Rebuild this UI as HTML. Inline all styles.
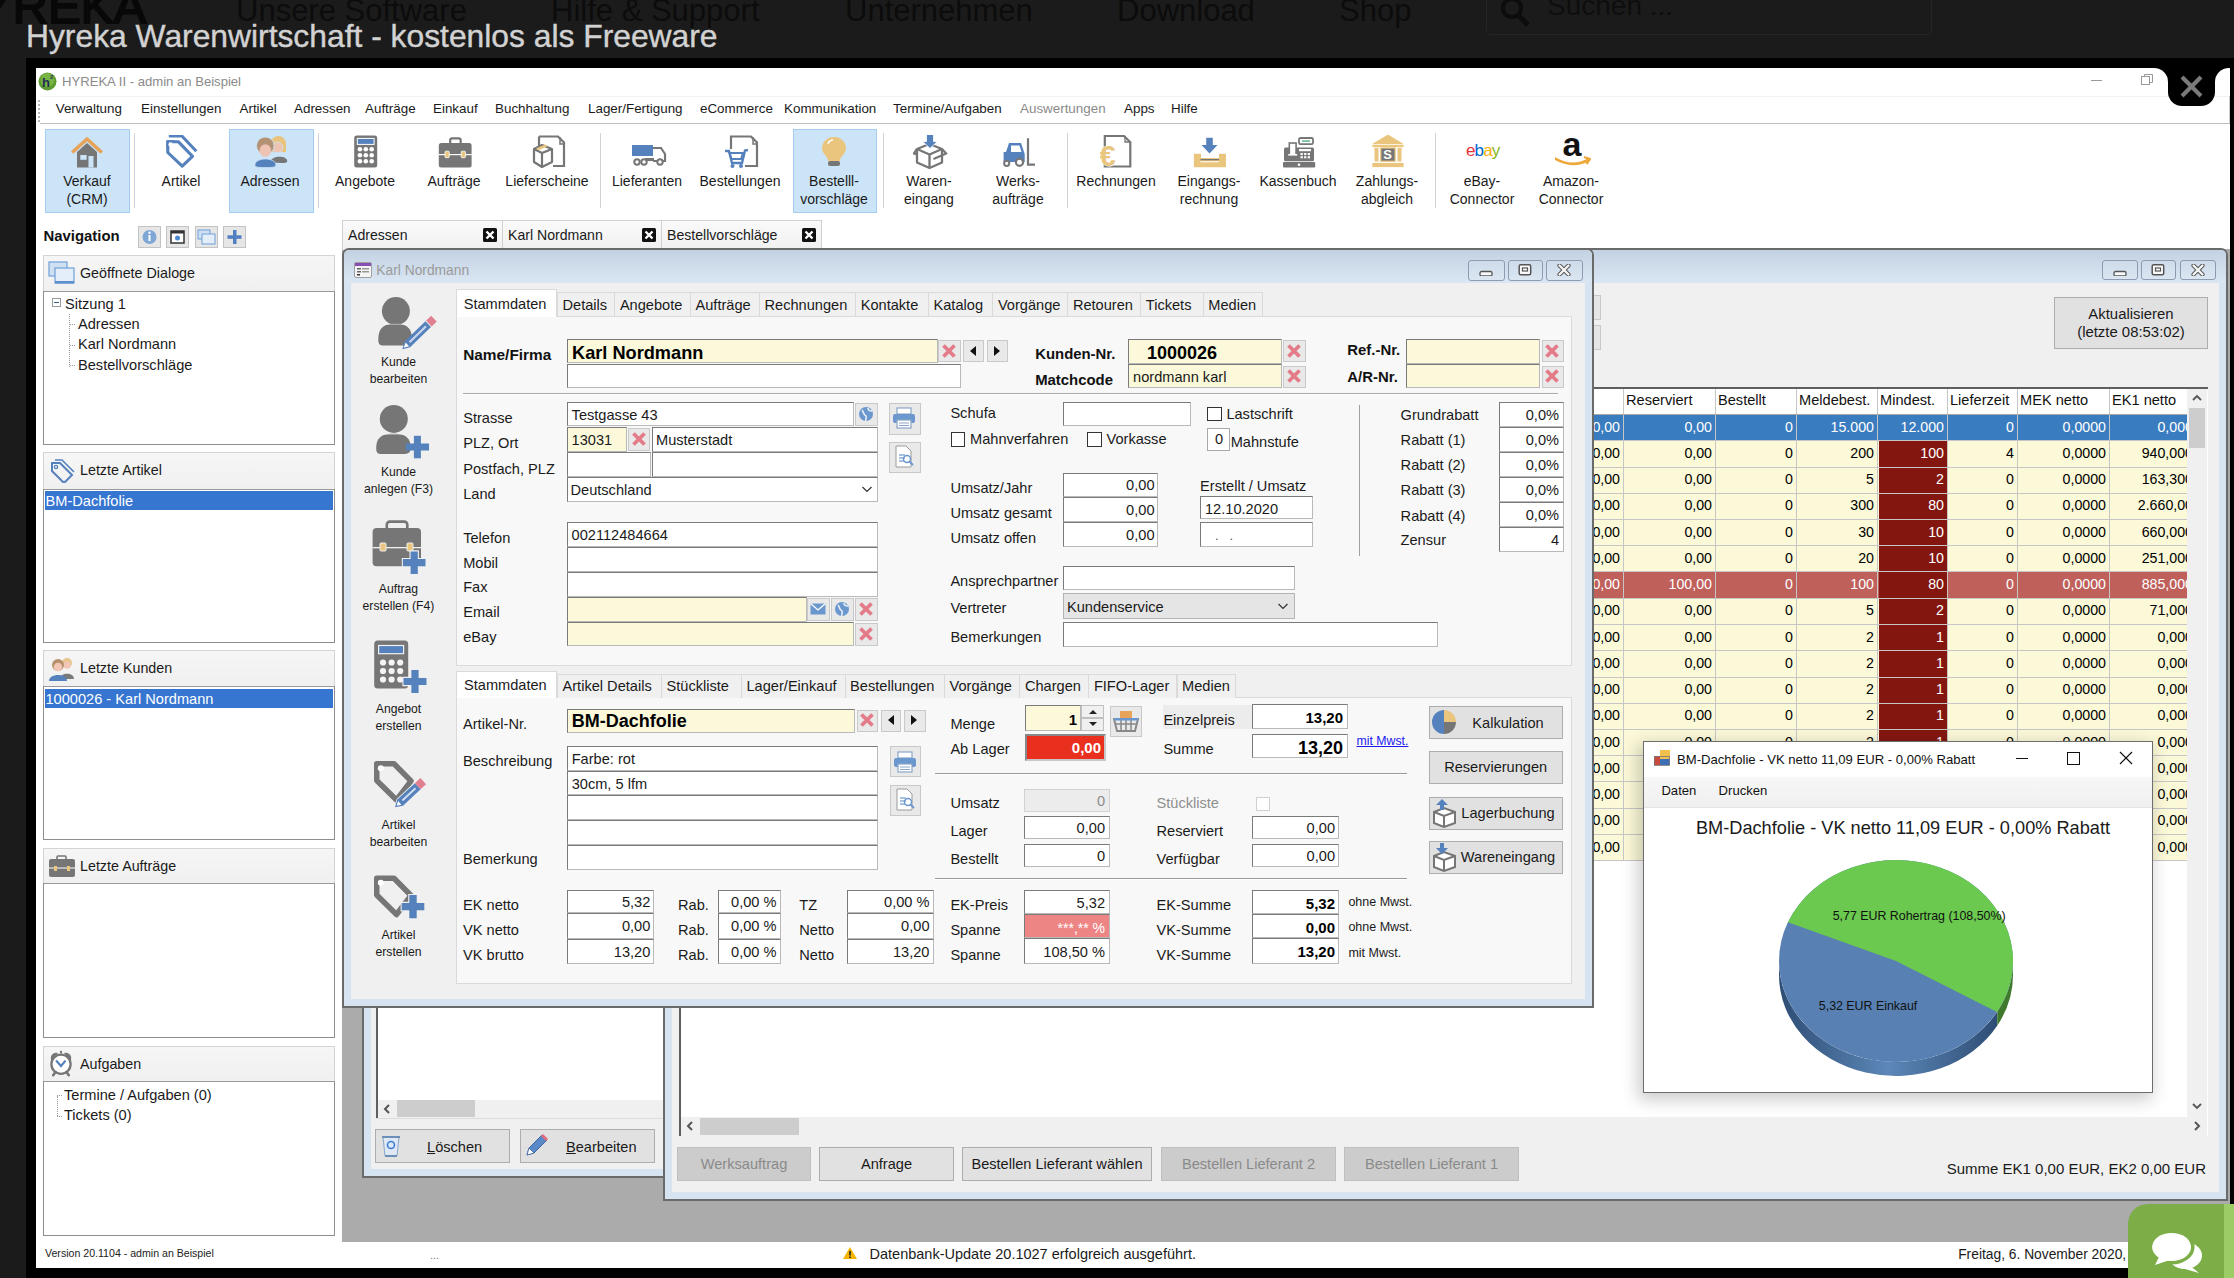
<!DOCTYPE html>
<html><head><meta charset="utf-8"><style>
html,body{margin:0;padding:0;}
body{width:2234px;height:1278px;position:relative;overflow:hidden;background:#1b1b1b;font-family:"Liberation Sans",sans-serif;}
.t{position:absolute;white-space:nowrap;line-height:1;}
.r{position:absolute;}
</style></head><body>
<div class="t" style="left:-20px;top:-18.48px;font-size:49px;color:#080808;font-weight:normal;-webkit-text-stroke:2px #080808;">YREKA</div>
<div class="t" style="left:236px;top:-5.24px;font-size:31px;color:#0c0c0c;font-weight:normal;">Unsere Software</div>
<div class="t" style="left:551px;top:-5.24px;font-size:31px;color:#0c0c0c;font-weight:normal;">Hilfe &amp; Support</div>
<div class="t" style="left:845px;top:-5.24px;font-size:31px;color:#0c0c0c;font-weight:normal;">Unternehmen</div>
<div class="t" style="left:1117px;top:-5.24px;font-size:31px;color:#0c0c0c;font-weight:normal;">Download</div>
<div class="t" style="left:1339px;top:-5.24px;font-size:31px;color:#0c0c0c;font-weight:normal;">Shop</div>
<div class="r" style="left:1486px;top:-10px;width:446px;height:45px;box-sizing:border-box;border:1px solid #262626;border-radius:5px;"></div>
<svg class="r" style="left:1496px;top:0px" width="40" height="30" viewBox="0 0 40 30"><circle cx="16" cy="8" r="9" fill="none" stroke="#0c0c0c" stroke-width="4"/><line x1="22" y1="15" x2="32" y2="25" stroke="#0c0c0c" stroke-width="5"/></svg>
<div class="t" style="left:1547px;top:-7.70px;font-size:28px;color:#0e0e0e;font-weight:normal;">Suchen ...</div>
<div class="t" style="left:26px;top:21.08px;font-size:31.8px;color:#d2d2d2;font-weight:normal;-webkit-text-stroke:0.4px #d2d2d2;">Hyreka Warenwirtschaft - kostenlos als Freeware</div>
<div class="r" style="left:26px;top:58px;width:2208px;height:1220px;background:#000;"></div>
<div class="r" style="left:36px;top:68px;width:2194px;height:1200px;background:#fff;"></div>
<svg class="r" style="left:38px;top:72px" width="19" height="19" viewBox="0 0 19 19"><circle cx="9.5" cy="9.5" r="9" fill="#5a9a2e"/><circle cx="9.5" cy="8" r="7" fill="#78b443"/><text x="4" y="15" font-family="Liberation Sans" font-weight="bold" font-size="13" fill="#1f2f55">h</text><text x="12" y="7" font-family="Liberation Sans" font-weight="bold" font-size="6" fill="#1f2f55">2</text></svg>
<div class="t" style="left:62px;top:74.91px;font-size:13.1px;color:#8a8a8a;font-weight:normal;">HYREKA II - admin an Beispiel</div>
<div class="r" style="left:40px;top:95px;width:2189px;height:28px;background:#fff;border-bottom:1px solid #bdbdbd;border-right:1px solid #cfcfcf;"></div>
<div class="r" style="left:41px;top:96px;width:2188px;height:1px;background:#eef3f8;"></div>
<div class="r" style="left:38px;top:100px;width:2px;height:2px;background:#b8b8b8;"></div>
<div class="r" style="left:38px;top:104px;width:2px;height:2px;background:#b8b8b8;"></div>
<div class="r" style="left:38px;top:108px;width:2px;height:2px;background:#b8b8b8;"></div>
<div class="r" style="left:38px;top:112px;width:2px;height:2px;background:#b8b8b8;"></div>
<div class="r" style="left:38px;top:116px;width:2px;height:2px;background:#b8b8b8;"></div>
<div class="r" style="left:38px;top:120px;width:2px;height:2px;background:#b8b8b8;"></div>
<div class="t" style="left:55.7px;top:102.36px;font-size:13.4px;color:#1a1a1a;font-weight:normal;">Verwaltung</div>
<div class="t" style="left:141px;top:102.36px;font-size:13.4px;color:#1a1a1a;font-weight:normal;">Einstellungen</div>
<div class="t" style="left:239.5px;top:102.36px;font-size:13.4px;color:#1a1a1a;font-weight:normal;">Artikel</div>
<div class="t" style="left:294px;top:102.36px;font-size:13.4px;color:#1a1a1a;font-weight:normal;">Adressen</div>
<div class="t" style="left:365px;top:102.36px;font-size:13.4px;color:#1a1a1a;font-weight:normal;">Aufträge</div>
<div class="t" style="left:433px;top:102.36px;font-size:13.4px;color:#1a1a1a;font-weight:normal;">Einkauf</div>
<div class="t" style="left:495px;top:102.36px;font-size:13.4px;color:#1a1a1a;font-weight:normal;">Buchhaltung</div>
<div class="t" style="left:588px;top:102.36px;font-size:13.4px;color:#1a1a1a;font-weight:normal;">Lager/Fertigung</div>
<div class="t" style="left:700px;top:102.36px;font-size:13.4px;color:#1a1a1a;font-weight:normal;">eCommerce</div>
<div class="t" style="left:784px;top:102.36px;font-size:13.4px;color:#1a1a1a;font-weight:normal;">Kommunikation</div>
<div class="t" style="left:893px;top:102.36px;font-size:13.4px;color:#1a1a1a;font-weight:normal;">Termine/Aufgaben</div>
<div class="t" style="left:1020px;top:102.36px;font-size:13.4px;color:#8a8a8a;font-weight:normal;">Auswertungen</div>
<div class="t" style="left:1124px;top:102.36px;font-size:13.4px;color:#1a1a1a;font-weight:normal;">Apps</div>
<div class="t" style="left:1171px;top:102.36px;font-size:13.4px;color:#1a1a1a;font-weight:normal;">Hilfe</div>
<div class="r" style="left:2154px;top:68px;width:76px;height:14px;background:#000;"></div>
<div class="r" style="left:2140px;top:68px;width:28px;height:28px;border-radius:50%;background:#fff;"></div>
<div class="r" style="left:2215px;top:68px;width:28px;height:28px;border-radius:50%;background:#fff;"></div>
<div class="r" style="left:2168px;top:58px;width:47px;height:48px;border-radius:0 0 14px 14px;background:#000;"></div>
<div class="r" style="left:2230px;top:58px;width:4px;height:72px;background:#000;"></div>
<svg class="r" style="left:2178px;top:74px" width="27" height="25" viewBox="0 0 27 25"><path d="M4 3 L23 22 M23 3 L4 22" stroke="#7a7a7a" stroke-width="4.2"/></svg>
<div class="r" style="left:2091px;top:79.5px;width:11px;height:1.5px;background:#9a9a9a;"></div>
<svg class="r" style="left:2140px;top:73px" width="14" height="14" viewBox="0 0 14 14"><rect x="1.5" y="3.5" width="8" height="8" fill="#fff" stroke="#999"/><path d="M4.5 3.5V1.5h8v8h-3" fill="none" stroke="#999"/></svg>
<div class="r" style="left:36px;top:124px;width:2194px;height:96px;background:#fff;"></div>
<div class="r" style="left:45px;top:129px;width:85px;height:84px;box-sizing:border-box;background:#cce4f7;border:1px solid #a4cef1;"></div>
<div class="r" style="left:229px;top:129px;width:85px;height:84px;box-sizing:border-box;background:#cce4f7;border:1px solid #a4cef1;"></div>
<div class="r" style="left:793px;top:129px;width:84px;height:84px;box-sizing:border-box;background:#cce4f7;border:1px solid #a4cef1;"></div>
<div class="r" style="left:134px;top:133px;width:1px;height:75px;background:#d2d2d2;"></div>
<div class="r" style="left:318px;top:133px;width:1px;height:75px;background:#d2d2d2;"></div>
<div class="r" style="left:600px;top:133px;width:1px;height:75px;background:#d2d2d2;"></div>
<div class="r" style="left:883px;top:133px;width:1px;height:75px;background:#d2d2d2;"></div>
<div class="r" style="left:1067px;top:133px;width:1px;height:75px;background:#d2d2d2;"></div>
<div class="r" style="left:1435px;top:133px;width:1px;height:75px;background:#d2d2d2;"></div>
<svg class="r" style="left:71px;top:135px" width="36" height="36" viewBox="0 0 36 36"><path d="M6 17 L16 8 L26 17 V32.5 H6Z" fill="#767676"/><path d="M1.2 17.5 L16 4 L30.8 17.5" fill="none" stroke="#e8a35a" stroke-width="3.6" stroke-linejoin="round"/><rect x="9.3" y="20" width="6.3" height="4.8" fill="#cce4f7"/><rect x="17.5" y="21" width="5" height="11.5" fill="#cce4f7"/></svg>
<div class="t" style="left:-313px;width:800px;text-align:center;top:173.65px;font-size:14.0px;color:#1a1a1a;font-weight:normal;">Verkauf</div>
<div class="t" style="left:-313px;width:800px;text-align:center;top:191.65px;font-size:14.0px;color:#1a1a1a;font-weight:normal;">(CRM)</div>
<svg class="r" style="left:165px;top:135px" width="36" height="36" viewBox="0 0 36 36"><path d="M3.8 1 H16.9 L31.3 16.3" fill="none" stroke="#5581bd" stroke-width="3" stroke-linejoin="round"/><path d="M2.8 6.8 H13.5 L27.5 21.3 L17.2 31.2 L2.8 17.5Z" fill="#fff" stroke="#5581bd" stroke-width="3.1" stroke-linejoin="round"/><path d="M1.3 5.3 H10 L1.3 14Z" fill="#5581bd"/><circle cx="5.6" cy="9.4" r="2.2" fill="#fff"/></svg>
<div class="t" style="left:-219px;width:800px;text-align:center;top:173.65px;font-size:14.0px;color:#1a1a1a;font-weight:normal;">Artikel</div>
<svg class="r" style="left:254px;top:135px" width="36" height="36" viewBox="0 0 36 36"><circle cx="24.4" cy="8.6" r="7.6" fill="#e8c47f"/><rect x="16.8" y="8.6" width="15.2" height="8.5" fill="#e8c47f"/><path d="M16.3 27.6 C16.3 20 33.2 20 33.2 26 C33.2 28 30 28 28 28Z" fill="#767676"/><circle cx="23.5" cy="12.5" r="5.3" fill="#efc3b3" stroke="#cce4f7" stroke-width="0.8"/><circle cx="11.3" cy="10.8" r="8.8" fill="#b39174" stroke="#cce4f7" stroke-width="0.8"/><ellipse cx="11.3" cy="15.5" rx="5.8" ry="6.3" fill="#efc3b3"/><path d="M0.9 30 C0.9 22 21.9 22 21.9 30 C21.9 32.5 18 32.5 11.4 32.5 C5 32.5 0.9 32.5 0.9 30Z" fill="#5581bd" stroke="#cce4f7" stroke-width="0.8"/></svg>
<div class="t" style="left:-130px;width:800px;text-align:center;top:173.65px;font-size:14.0px;color:#1a1a1a;font-weight:normal;">Adressen</div>
<svg class="r" style="left:349px;top:135px" width="36" height="36" viewBox="0 0 36 36"><rect x="5.2" y="0.5" width="23" height="32" rx="2.5" fill="#767676"/><rect x="8.3" y="3.4" width="16.8" height="6" fill="#5581bd" stroke="#fff" stroke-width="1"/><circle cx="10.9" cy="14.3" r="2.3" fill="#fff"/><circle cx="10.9" cy="20.3" r="2.3" fill="#fff"/><circle cx="10.9" cy="26.3" r="2.3" fill="#fff"/><circle cx="16.8" cy="14.3" r="2.3" fill="#fff"/><circle cx="16.8" cy="20.3" r="2.3" fill="#fff"/><circle cx="16.8" cy="26.3" r="2.3" fill="#fff"/><circle cx="22.700000000000003" cy="14.3" r="2.3" fill="#fff"/><circle cx="22.700000000000003" cy="20.3" r="2.3" fill="#fff"/><circle cx="22.700000000000003" cy="26.3" r="2.3" fill="#fff"/></svg>
<div class="t" style="left:-35px;width:800px;text-align:center;top:173.65px;font-size:14.0px;color:#1a1a1a;font-weight:normal;">Angebote</div>
<svg class="r" style="left:438px;top:135px" width="36" height="36" viewBox="0 0 36 36"><rect x="12.2" y="3.4" width="10.5" height="6" rx="2" fill="none" stroke="#767676" stroke-width="2.2"/><rect x="0.8" y="8" width="32.8" height="24.5" rx="2.5" fill="#767676"/><rect x="0.8" y="19" width="32.8" height="1.2" fill="#fff"/><rect x="7" y="16.2" width="4.2" height="6.5" rx="0.8" fill="#eac57e" stroke="#fff" stroke-width="0.8"/><rect x="23.2" y="16.2" width="4.2" height="6.5" rx="0.8" fill="#eac57e" stroke="#fff" stroke-width="0.8"/></svg>
<div class="t" style="left:54px;width:800px;text-align:center;top:173.65px;font-size:14.0px;color:#1a1a1a;font-weight:normal;">Aufträge</div>
<svg class="r" style="left:531px;top:135px" width="36" height="36" viewBox="0 0 36 36"><path d="M8 1.5 H27 L33 7.5 V31 H22" fill="none" stroke="#767676" stroke-width="2.2"/><path d="M8 1.5 V12" stroke="#767676" stroke-width="2.2"/><path d="M29 2 V9 H33" fill="none" stroke="#767676" stroke-width="1.5"/><path d="M3 14 L11 10 L21 14 V27 L11 32 L3 27Z" fill="#fff" stroke="#767676" stroke-width="2.2" stroke-linejoin="round"/><path d="M3 14 L11 18 L21 14 M11 18 V32" fill="none" stroke="#767676" stroke-width="2.2"/><path d="M5 13.5 L14 9.5 L17 11 L8 15Z" fill="#eac57e"/></svg>
<div class="t" style="left:147px;width:800px;text-align:center;top:173.65px;font-size:14.0px;color:#1a1a1a;font-weight:normal;">Lieferscheine</div>
<svg class="r" style="left:631px;top:135px" width="36" height="36" viewBox="0 0 36 36"><rect x="1" y="10" width="21" height="11" fill="#5581bd"/><path d="M22 13 H30 L34 19 V26 H22" fill="none" stroke="#767676" stroke-width="2.2"/><rect x="14" y="23" width="9" height="3" fill="#767676"/><circle cx="6" cy="27" r="2.7" fill="#fff" stroke="#767676" stroke-width="2"/><circle cx="13" cy="27" r="2.7" fill="#fff" stroke="#767676" stroke-width="2"/><circle cx="29" cy="27" r="2.7" fill="#fff" stroke="#767676" stroke-width="2"/></svg>
<div class="t" style="left:247px;width:800px;text-align:center;top:173.65px;font-size:14.0px;color:#1a1a1a;font-weight:normal;">Lieferanten</div>
<svg class="r" style="left:724px;top:135px" width="36" height="36" viewBox="0 0 36 36"><path d="M7 14 V1.5 H27 L33 7.5 V31 H21" fill="none" stroke="#767676" stroke-width="2.2"/><path d="M29 2 V9 H33" fill="none" stroke="#767676" stroke-width="1.5"/><path d="M1 16 H5 L8 28 H18 L21 15.5 L24 15" fill="none" stroke="#5581bd" stroke-width="2.4"/><path d="M5.5 18 H19 L17 24 H7.5Z" fill="none" stroke="#5581bd" stroke-width="2"/><circle cx="8.5" cy="31" r="2" fill="#5581bd"/><circle cx="17" cy="31" r="2" fill="#5581bd"/></svg>
<div class="t" style="left:340px;width:800px;text-align:center;top:173.65px;font-size:14.0px;color:#1a1a1a;font-weight:normal;">Bestellungen</div>
<svg class="r" style="left:818px;top:135px" width="36" height="36" viewBox="0 0 36 36"><path d="M16 2 C8 2 4 8 4 13 C4 19 10 21 10 26 H22 C22 21 28 19 28 13 C28 8 24 2 16 2Z" fill="#eac57e"/><rect x="10" y="26" width="12" height="5" rx="2" fill="#767676"/><path d="M10 9 C11 6 13 5 15 5" fill="none" stroke="#fff" stroke-width="1.5"/></svg>
<div class="t" style="left:434px;width:800px;text-align:center;top:173.65px;font-size:14.0px;color:#1a1a1a;font-weight:normal;">Bestelll-</div>
<div class="t" style="left:434px;width:800px;text-align:center;top:191.65px;font-size:14.0px;color:#1a1a1a;font-weight:normal;">vorschläge</div>
<svg class="r" style="left:913px;top:135px" width="36" height="36" viewBox="0 0 36 36"><path d="M4 14 L16.5 9 L29 14 V27.5 L16.5 33 L4 27.5Z" fill="#fff" stroke="#767676" stroke-width="2.3" stroke-linejoin="round"/><path d="M4 14 L16.5 19.5 L29 14 M16.5 19.5 V33 M4 14 L0.8 18.5 L4 19.5 M29 14 L33.2 18.5 L20.5 24" fill="none" stroke="#767676" stroke-width="2.3" stroke-linejoin="round"/><path d="M13.5 -0.7 H20.5 V6.5 H24.3 L17 13.4 L9.7 6.5 H13.5Z" fill="#5581bd" stroke="#fff" stroke-width="0.8"/></svg>
<div class="t" style="left:529px;width:800px;text-align:center;top:173.65px;font-size:14.0px;color:#1a1a1a;font-weight:normal;">Waren-</div>
<div class="t" style="left:529px;width:800px;text-align:center;top:191.65px;font-size:14.0px;color:#1a1a1a;font-weight:normal;">eingang</div>
<svg class="r" style="left:1002px;top:135px" width="36" height="36" viewBox="0 0 36 36"><path d="M4 17 L7 8 H19 L22.7 19 V27 H1.6 V17Z" fill="#5581bd"/><path d="M9 10.5 H17.5 L19.5 17 H9Z" fill="#fff"/><path d="M26 3.2 V29.6 H33" fill="none" stroke="#767676" stroke-width="2.2"/><circle cx="4.7" cy="28.3" r="2.6" fill="#fff" stroke="#767676" stroke-width="2"/><circle cx="17.5" cy="27.3" r="3.6" fill="#fff" stroke="#767676" stroke-width="2.2"/></svg>
<div class="t" style="left:618px;width:800px;text-align:center;top:173.65px;font-size:14.0px;color:#1a1a1a;font-weight:normal;">Werks-</div>
<div class="t" style="left:618px;width:800px;text-align:center;top:191.65px;font-size:14.0px;color:#1a1a1a;font-weight:normal;">aufträge</div>
<svg class="r" style="left:1100px;top:135px" width="36" height="36" viewBox="0 0 36 36"><path d="M4.8 1 H24 L30.3 7.3 V31.5 H4.8Z" fill="none" stroke="#767676" stroke-width="2.2"/><path d="M25 1.5 V7 H30" fill="none" stroke="#767676" stroke-width="1.3"/><text x="-0.5" y="31" font-family="Liberation Sans" font-weight="bold" font-size="29" fill="#eac57e" stroke="#fff" stroke-width="1" paint-order="stroke">€</text></svg>
<div class="t" style="left:716px;width:800px;text-align:center;top:173.65px;font-size:14.0px;color:#1a1a1a;font-weight:normal;">Rechnungen</div>
<svg class="r" style="left:1193px;top:135px" width="36" height="36" viewBox="0 0 36 36"><path d="M13.2 2.7 H19.8 V10 H24.5 L16.5 18.5 L8.5 10 H13.2Z" fill="#5581bd"/><path d="M0.9 18.8 H8 V23 H26 V18.8 H33 V32.2 H0.9Z" fill="#eac57e"/><rect x="7.5" y="24" width="18.5" height="1.3" fill="#767676"/><rect x="7.5" y="26.3" width="18.5" height="1" fill="#fff"/></svg>
<div class="t" style="left:809px;width:800px;text-align:center;top:173.65px;font-size:14.0px;color:#1a1a1a;font-weight:normal;">Eingangs-</div>
<div class="t" style="left:809px;width:800px;text-align:center;top:191.65px;font-size:14.0px;color:#1a1a1a;font-weight:normal;">rechnung</div>
<svg class="r" style="left:1282px;top:135px" width="36" height="36" viewBox="0 0 36 36"><rect x="17" y="3" width="14" height="6.2" rx="1.5" fill="#fff" stroke="#767676" stroke-width="1.8"/><rect x="20" y="5.2" width="8" height="1.8" fill="#7cc0a0"/><rect x="2" y="12.6" width="30" height="13.6" rx="1.5" fill="#767676"/><rect x="7.3" y="8" width="6.8" height="12.2" fill="#fff" stroke="#767676" stroke-width="1.6"/><rect x="6.3" y="19" width="8.8" height="1.6" fill="#fff"/><rect x="17" y="14" width="12" height="2.2" fill="#fff"/><rect x="1" y="27" width="32.2" height="5.5" rx="1" fill="#767676"/><circle cx="17" cy="29.7" r="1.3" fill="#fff"/><rect x="18.5" y="18.0" width="2.3" height="2.1" fill="#fff"/><rect x="18.5" y="21.2" width="2.3" height="2.1" fill="#fff"/><rect x="22.1" y="18.0" width="2.3" height="2.1" fill="#fff"/><rect x="22.1" y="21.2" width="2.3" height="2.1" fill="#fff"/><rect x="25.7" y="18.0" width="2.3" height="2.1" fill="#fff"/><rect x="25.7" y="21.2" width="2.3" height="2.1" fill="#fff"/></svg>
<div class="t" style="left:898px;width:800px;text-align:center;top:173.65px;font-size:14.0px;color:#1a1a1a;font-weight:normal;">Kassenbuch</div>
<svg class="r" style="left:1371px;top:135px" width="36" height="36" viewBox="0 0 36 36"><path d="M0.8 9.2 L17 -0.5 L33 9.2Z" fill="#eac57e"/><rect x="1.5" y="10" width="31" height="2.2" fill="#eac57e"/><rect x="3.5" y="13" width="4" height="13.5" fill="#eac57e"/><rect x="26.5" y="13" width="4" height="13.5" fill="#eac57e"/><rect x="9.8" y="13" width="14.3" height="13.2" fill="#767676" stroke="#eac57e" stroke-width="1.2"/><text x="12.3" y="24.3" font-family="Liberation Sans" font-weight="bold" font-size="13" fill="#fff">S</text><rect x="1.3" y="27.9" width="31.3" height="4.2" fill="#eac57e"/></svg>
<div class="t" style="left:987px;width:800px;text-align:center;top:173.65px;font-size:14.0px;color:#1a1a1a;font-weight:normal;">Zahlungs-</div>
<div class="t" style="left:987px;width:800px;text-align:center;top:191.65px;font-size:14.0px;color:#1a1a1a;font-weight:normal;">abgleich</div>
<svg class="r" style="left:1466px;top:135px" width="36" height="36" viewBox="0 0 36 36"><text x="0" y="21" font-family="Liberation Sans" font-size="17" letter-spacing="-0.9"><tspan fill="#e53238">e</tspan><tspan fill="#0064d2">b</tspan><tspan fill="#f5af02">a</tspan><tspan fill="#86b817">y</tspan></text></svg>
<div class="t" style="left:1082px;width:800px;text-align:center;top:173.65px;font-size:14.0px;color:#1a1a1a;font-weight:normal;">eBay-</div>
<div class="t" style="left:1082px;width:800px;text-align:center;top:191.65px;font-size:14.0px;color:#1a1a1a;font-weight:normal;">Connector</div>
<svg class="r" style="left:1555px;top:135px" width="36" height="36" viewBox="0 0 36 36"><text x="7.5" y="21" font-family="Liberation Sans" font-weight="bold" font-size="34" fill="#111">a</text><path d="M-1 23 Q17 34 34 24.5" fill="none" stroke="#eea73a" stroke-width="2.6"/><path d="M29 22 L35 24 L31.5 29" fill="none" stroke="#eea73a" stroke-width="2.2"/></svg>
<div class="t" style="left:1171px;width:800px;text-align:center;top:173.65px;font-size:14.0px;color:#1a1a1a;font-weight:normal;">Amazon-</div>
<div class="t" style="left:1171px;width:800px;text-align:center;top:191.65px;font-size:14.0px;color:#1a1a1a;font-weight:normal;">Connector</div>
<div class="t" style="left:43.5px;top:229.39px;font-size:14.9px;color:#111;font-weight:bold;">Navigation</div>
<div class="r" style="left:138px;top:226px;width:23px;height:22px;box-sizing:border-box;background:#e6e6e6;border:1px solid #c3c3c3;"></div>
<div class="r" style="left:166px;top:226px;width:23px;height:22px;box-sizing:border-box;background:#e6e6e6;border:1px solid #c3c3c3;"></div>
<div class="r" style="left:195px;top:226px;width:23px;height:22px;box-sizing:border-box;background:#e6e6e6;border:1px solid #c3c3c3;"></div>
<div class="r" style="left:223px;top:226px;width:23px;height:22px;box-sizing:border-box;background:#e6e6e6;border:1px solid #c3c3c3;"></div>
<svg class="r" style="left:138px;top:226px" width="23" height="22" viewBox="0 0 23 22"><circle cx="11.5" cy="11" r="7" fill="#7ea7d6"/><rect x="10.5" y="9" width="2" height="6" fill="#fff"/><circle cx="11.5" cy="6.8" r="1.2" fill="#fff"/></svg>
<svg class="r" style="left:166px;top:226px" width="23" height="22" viewBox="0 0 23 22"><rect x="5" y="5" width="13" height="12" fill="#fff" stroke="#333" stroke-width="1.5"/><rect x="5" y="5" width="13" height="2.5" fill="#333"/><circle cx="11.5" cy="12" r="2.5" fill="#4f8ad0"/></svg>
<svg class="r" style="left:195px;top:226px" width="23" height="22" viewBox="0 0 23 22"><rect x="3" y="4" width="12" height="9" fill="#cfe0f3" stroke="#6fa0d8"/><rect x="7" y="8" width="13" height="10" fill="#e3eefa" stroke="#6fa0d8"/></svg>
<svg class="r" style="left:223px;top:226px" width="23" height="22" viewBox="0 0 23 22"><rect x="10" y="4" width="3.5" height="14" fill="#4f7fc0"/><rect x="4.5" y="9.3" width="14" height="3.5" fill="#4f7fc0"/></svg>
<div class="r" style="left:43px;top:255px;width:292px;height:37px;box-sizing:border-box;background:linear-gradient(#f6f6f6,#f0f0f0);border:1px solid #d4d4d4;"></div>
<div class="r" style="left:43px;top:291px;width:292px;height:154px;box-sizing:border-box;background:#fff;border:1px solid #8e8e8e;border-top-color:#9a9a9a;"></div>
<div class="t" style="left:80px;top:265.90px;font-size:14.3px;color:#1a1a1a;font-weight:normal;">Geöffnete Dialoge</div>
<div class="r" style="left:43px;top:452px;width:292px;height:38px;box-sizing:border-box;background:linear-gradient(#f6f6f6,#f0f0f0);border:1px solid #d4d4d4;"></div>
<div class="r" style="left:43px;top:489px;width:292px;height:154px;box-sizing:border-box;background:#fff;border:1px solid #8e8e8e;border-top-color:#9a9a9a;"></div>
<div class="t" style="left:80px;top:462.90px;font-size:14.3px;color:#1a1a1a;font-weight:normal;">Letzte Artikel</div>
<div class="r" style="left:43px;top:650px;width:292px;height:37px;box-sizing:border-box;background:linear-gradient(#f6f6f6,#f0f0f0);border:1px solid #d4d4d4;"></div>
<div class="r" style="left:43px;top:686px;width:292px;height:154px;box-sizing:border-box;background:#fff;border:1px solid #8e8e8e;border-top-color:#9a9a9a;"></div>
<div class="t" style="left:80px;top:660.90px;font-size:14.3px;color:#1a1a1a;font-weight:normal;">Letzte Kunden</div>
<div class="r" style="left:43px;top:848px;width:292px;height:36px;box-sizing:border-box;background:linear-gradient(#f6f6f6,#f0f0f0);border:1px solid #d4d4d4;"></div>
<div class="r" style="left:43px;top:883px;width:292px;height:155px;box-sizing:border-box;background:#fff;border:1px solid #8e8e8e;border-top-color:#9a9a9a;"></div>
<div class="t" style="left:80px;top:858.90px;font-size:14.3px;color:#1a1a1a;font-weight:normal;">Letzte Aufträge</div>
<div class="r" style="left:43px;top:1046px;width:292px;height:36px;box-sizing:border-box;background:linear-gradient(#f6f6f6,#f0f0f0);border:1px solid #d4d4d4;"></div>
<div class="r" style="left:43px;top:1081px;width:292px;height:155px;box-sizing:border-box;background:#fff;border:1px solid #8e8e8e;border-top-color:#9a9a9a;"></div>
<div class="t" style="left:80px;top:1056.90px;font-size:14.3px;color:#1a1a1a;font-weight:normal;">Aufgaben</div>
<svg class="r" style="left:48px;top:259px" width="28" height="26" viewBox="0 0 28 26"><rect x="1" y="3" width="18" height="14" fill="#cfe0f3" stroke="#6fa0d8" stroke-width="1.2"/><rect x="7" y="9" width="19" height="15" fill="#e3eefa" stroke="#6fa0d8" stroke-width="1.2"/><rect x="7" y="22" width="19" height="2.5" fill="#5b8fd0"/></svg>
<svg class="r" style="left:48px;top:457px" width="28" height="26" viewBox="0 0 28 26"><path d="M4 6 H12 L24 18 L16 26 L4 14Z" fill="none" stroke="#5581bd" stroke-width="2"/><path d="M7 3 H14 L26 15" fill="none" stroke="#5581bd" stroke-width="1.6"/><circle cx="8" cy="10" r="1.6" fill="none" stroke="#5581bd" stroke-width="1.3"/></svg>
<svg class="r" style="left:48px;top:655px" width="28" height="26" viewBox="0 0 28 26"><circle cx="19" cy="8" r="5" fill="#e9c58a"/><path d="M12 24 C12 17 26 17 26 24Z" fill="#7a7a7a"/><circle cx="19" cy="10" r="3.8" fill="#f2c6b5"/><circle cx="10" cy="10" r="6" fill="#b5916b"/><circle cx="10" cy="12" r="4.3" fill="#f2c6b5"/><path d="M1 26 C1 18 19 18 19 26Z" fill="#5581bd"/></svg>
<svg class="r" style="left:48px;top:853px" width="28" height="26" viewBox="0 0 28 26"><rect x="9" y="3" width="9" height="4" rx="1" fill="none" stroke="#767676" stroke-width="1.6"/><rect x="1" y="6" width="26" height="18" rx="2" fill="#767676"/><line x1="1" y1="15" x2="27" y2="15" stroke="#fff" stroke-width="1"/><rect x="6" y="13" width="3" height="5" fill="#eac57e"/><rect x="19" y="13" width="3" height="5" fill="#eac57e"/></svg>
<svg class="r" style="left:48px;top:1050px" width="28" height="28" viewBox="0 0 28 28"><path d="M3.2 10.5 C1.5 6 5 1.5 10 3Z" fill="#767676"/><path d="M22.8 10.5 C24.5 6 21 1.5 16 3Z" fill="#767676"/><rect x="12" y="0.8" width="2" height="2.6" fill="#767676"/><circle cx="13" cy="14.2" r="9.6" fill="#fff" stroke="#767676" stroke-width="2.3"/><path d="M7.5 22 L5.2 25.2 M18.5 22 L20.8 25.2" stroke="#767676" stroke-width="2.6" stroke-linecap="round"/><path d="M8.1 10.6 L13 16 L17.5 10.6" fill="none" stroke="#5581bd" stroke-width="2.2"/></svg>
<div class="r" style="left:52px;top:298px;width:9px;height:9px;box-sizing:border-box;background:#fff;border:1px solid #9a9a9a;"></div>
<div class="r" style="left:54px;top:302px;width:5px;height:1px;background:#3d5a8a;"></div>
<div class="t" style="left:65px;top:296.64px;font-size:14.6px;color:#1a1a1a;font-weight:normal;">Sitzung 1</div>
<div class="r" style="left:69px;top:314px;width:0;height:53px;border-left:1px dotted #9a9a9a;"></div>
<div class="r" style="left:70px;top:324px;width:5px;height:0;border-top:1px dotted #9a9a9a;"></div>
<div class="t" style="left:78px;top:316.64px;font-size:14.6px;color:#1a1a1a;font-weight:normal;">Adressen</div>
<div class="r" style="left:70px;top:344.5px;width:5px;height:0;border-top:1px dotted #9a9a9a;"></div>
<div class="t" style="left:78px;top:337.14px;font-size:14.6px;color:#1a1a1a;font-weight:normal;">Karl Nordmann</div>
<div class="r" style="left:70px;top:365px;width:5px;height:0;border-top:1px dotted #9a9a9a;"></div>
<div class="t" style="left:78px;top:357.64px;font-size:14.6px;color:#1a1a1a;font-weight:normal;">Bestellvorschläge</div>
<div class="r" style="left:45px;top:491px;width:288px;height:19px;background:#3676d0;"></div>
<div class="t" style="left:45.5px;top:493.64px;font-size:14.6px;color:#fff;font-weight:normal;">BM-Dachfolie</div>
<div class="r" style="left:45px;top:688.5px;width:288px;height:19.0px;background:#3676d0;"></div>
<div class="t" style="left:45.5px;top:691.64px;font-size:14.6px;color:#fff;font-weight:normal;">1000026 - Karl Nordmann</div>
<div class="r" style="left:57px;top:1096px;width:0;height:20px;border-left:1px dotted #9a9a9a;"></div>
<div class="r" style="left:57px;top:1095px;width:5px;height:0;border-top:1px dotted #9a9a9a;"></div>
<div class="t" style="left:64px;top:1087.64px;font-size:14.6px;color:#1a1a1a;font-weight:normal;">Termine / Aufgaben (0)</div>
<div class="r" style="left:57px;top:1115.5px;width:5px;height:0;border-top:1px dotted #9a9a9a;"></div>
<div class="t" style="left:64px;top:1108.14px;font-size:14.6px;color:#1a1a1a;font-weight:normal;">Tickets (0)</div>
<div class="t" style="left:45px;top:1248.03px;font-size:10.6px;color:#222;font-weight:normal;">Version 20.1104 - admin an Beispiel</div>
<div class="r" style="left:342px;top:249px;width:1888px;height:993px;background:#ababab;"></div>
<div class="r" style="left:342px;top:220px;width:1888px;height:29px;background:#fff;"></div>
<div class="r" style="left:342px;top:220px;width:161px;height:30px;box-sizing:border-box;background:linear-gradient(#fafafa,#f0f0f0);border:1px solid #d0d0d0;border-bottom:none;"></div>
<div class="t" style="left:348px;top:227.56px;font-size:14.1px;color:#1a1a1a;font-weight:normal;">Adressen</div>
<svg class="r" style="left:483px;top:228px" width="14" height="14" viewBox="0 0 14 14"><rect width="14" height="14" rx="1.5" fill="#111"/><path d="M3.5 3.5 L10.5 10.5 M10.5 3.5 L3.5 10.5" stroke="#fff" stroke-width="2.4"/></svg>
<div class="r" style="left:502px;top:220px;width:160px;height:30px;box-sizing:border-box;background:linear-gradient(#fafafa,#f0f0f0);border:1px solid #d0d0d0;border-bottom:none;"></div>
<div class="t" style="left:508px;top:227.56px;font-size:14.1px;color:#1a1a1a;font-weight:normal;">Karl Nordmann</div>
<svg class="r" style="left:642px;top:228px" width="14" height="14" viewBox="0 0 14 14"><rect width="14" height="14" rx="1.5" fill="#111"/><path d="M3.5 3.5 L10.5 10.5 M10.5 3.5 L3.5 10.5" stroke="#fff" stroke-width="2.4"/></svg>
<div class="r" style="left:661px;top:220px;width:161px;height:30px;box-sizing:border-box;background:linear-gradient(#fafafa,#f0f0f0);border:1px solid #d0d0d0;border-bottom:none;"></div>
<div class="t" style="left:667px;top:227.56px;font-size:14.1px;color:#1a1a1a;font-weight:normal;">Bestellvorschläge</div>
<svg class="r" style="left:802px;top:228px" width="14" height="14" viewBox="0 0 14 14"><rect width="14" height="14" rx="1.5" fill="#111"/><path d="M3.5 3.5 L10.5 10.5 M10.5 3.5 L3.5 10.5" stroke="#fff" stroke-width="2.4"/></svg>
<div class="r" style="left:362px;top:699px;width:338px;height:479px;box-sizing:border-box;background:#d6e4f2;border:2px solid #6a6a6a;border-radius:7px 7px 0 0;"></div>
<div class="r" style="left:364px;top:701px;width:334px;height:33px;background:linear-gradient(#c3d2e2,#dae6f3);border-radius:5px 5px 0 0;"></div>
<div class="r" style="left:371px;top:734px;width:320px;height:435px;background:#f0f0f0;"></div>
<div class="r" style="left:376px;top:700px;width:287px;height:418px;background:#fff;border-left:2px solid #5f5f5f;box-sizing:border-box;"></div>
<div class="r" style="left:378px;top:1100px;width:285px;height:18px;background:#f0f0f0;"></div>
<div class="r" style="left:397px;top:1100px;width:78px;height:17px;background:#cdcdcd;"></div>
<svg class="r" style="left:380px;top:1102px" width="14" height="14" viewBox="0 0 14 14"><path d="M9 3 L5 7 L9 11" fill="none" stroke="#555" stroke-width="2"/></svg>
<div class="r" style="left:376px;top:1118px;width:287px;height:1px;background:#dcdcdc;"></div>
<div class="r" style="left:375px;top:1128.5px;width:135px;height:34.0px;box-sizing:border-box;background:#e1e1e1;border:1px solid #adadad;"></div>
<div class="r" style="left:520px;top:1128.5px;width:135px;height:34.0px;box-sizing:border-box;background:#e1e1e1;border:1px solid #adadad;"></div>
<svg class="r" style="left:380px;top:1133px" width="22" height="26" viewBox="0 0 22 26"><path d="M3 4 H19 L17 23 H5Z" fill="#dfe9f5" stroke="#8aa6c8" stroke-width="1"/><rect x="2" y="3" width="18" height="2" fill="#6c8fb8"/><rect x="5" y="22" width="12" height="2" fill="#6c8fb8"/><circle cx="11" cy="12" r="3.5" fill="none" stroke="#3b7dd8" stroke-width="1.6"/></svg>
<div class="t" style="left:427px;top:1139.64px;font-size:14.6px;color:#1a1a1a;font-weight:normal;"><u>L</u>öschen</div>
<svg class="r" style="left:524px;top:1132px" width="26" height="26" viewBox="0 0 26 26"><path d="M3 23 L5 16 L18 3 L23 8 L10 21Z" fill="#5a89c8" stroke="#3f6aa5" stroke-width="1"/><path d="M17 4 L19 2 L24 7 L22 9Z" fill="#e26d7e"/><path d="M3 23 L5 16 L10 21Z" fill="#fff" stroke="#3f6aa5" stroke-width="0.8"/></svg>
<div class="t" style="left:566px;top:1139.64px;font-size:14.6px;color:#1a1a1a;font-weight:normal;"><u>B</u>earbeiten</div>
<div class="r" style="left:663px;top:248px;width:1565px;height:953px;box-sizing:border-box;background:#d6e4f2;border:2px solid #6a6a6a;border-radius:7px 7px 0 0;"></div>
<div class="r" style="left:665px;top:250px;width:1561px;height:33px;background:linear-gradient(#c3d2e2,#dae6f3);border-radius:5px 5px 0 0;"></div>
<div class="r" style="left:672px;top:283px;width:1547px;height:909px;background:#f0f0f0;"></div>
<div class="r" style="left:2102px;top:260px;width:36px;height:20px;box-sizing:border-box;background:rgba(255,255,255,0.08);border:1.5px solid #8e9bb0;border-radius:3px;"></div>
<svg class="r" style="left:2112px;top:264px" width="16" height="12" viewBox="0 0 16 12"><rect x="2" y="7.5" width="12" height="4.5" rx="1.5" fill="#fafafa" stroke="#555" stroke-width="1.3"/></svg>
<div class="r" style="left:2141px;top:260px;width:35px;height:20px;box-sizing:border-box;background:rgba(255,255,255,0.08);border:1.5px solid #8e9bb0;border-radius:3px;"></div>
<svg class="r" style="left:2150px;top:264px" width="16" height="12" viewBox="0 0 16 12"><rect x="2.2" y="0.8" width="11.5" height="10" rx="1.5" fill="#fafafa" stroke="#555" stroke-width="1.5"/><rect x="5.5" y="4" width="5" height="3" fill="#fff" stroke="#555" stroke-width="1.2"/></svg>
<div class="r" style="left:2180px;top:260px;width:36px;height:20px;box-sizing:border-box;background:rgba(255,255,255,0.08);border:1.5px solid #8e9bb0;border-radius:3px;"></div>
<svg class="r" style="left:2190px;top:264px" width="16" height="12" viewBox="0 0 16 12"><path d="M3.5 1.5 L12.5 10.5 M12.5 1.5 L3.5 10.5" stroke="#555" stroke-width="4.2" stroke-linecap="round"/><path d="M3.5 1.5 L12.5 10.5 M12.5 1.5 L3.5 10.5" stroke="#fafafa" stroke-width="2.2" stroke-linecap="round"/></svg>
<div class="r" style="left:1585px;top:295px;width:16px;height:25px;box-sizing:border-box;background:#e5e5e5;border:1px solid #c8c8c8;"></div>
<div class="r" style="left:1585px;top:325px;width:16px;height:25px;box-sizing:border-box;background:#e5e5e5;border:1px solid #c8c8c8;"></div>
<div class="r" style="left:2054px;top:296.5px;width:154px;height:52.0px;box-sizing:border-box;background:#e1e1e1;border:1px solid #adadad;"></div>
<div class="t" style="left:1731px;width:800px;text-align:center;top:307.09px;font-size:14.9px;color:#1a1a1a;font-weight:normal;">Aktualisieren</div>
<div class="t" style="left:1731px;width:800px;text-align:center;top:325.49px;font-size:14.9px;color:#1a1a1a;font-weight:normal;">(letzte 08:53:02)</div>
<div class="r" style="left:679px;top:387px;width:1529px;height:749px;background:#fff;border-left:2px solid #5f5f5f;border-top:2px solid #5f5f5f;box-sizing:border-box;"></div>
<div class="r" style="left:681px;top:389px;width:1506px;height:25px;background:#fff;"></div>
<div class="r" style="left:1500px;top:415px;width:687px;height:26px;background:#3a7cc0;"></div>
<div class="r" style="left:1500px;top:440px;width:687px;height:1px;background:#c6c6c6;"></div>
<div class="t" style="left:820px;width:800px;text-align:right;top:419.68px;font-size:14.2px;color:#fff;font-weight:normal;">0,00</div>
<div class="t" style="left:912px;width:800px;text-align:right;top:419.68px;font-size:14.2px;color:#fff;font-weight:normal;">0,00</div>
<div class="t" style="left:993px;width:800px;text-align:right;top:419.68px;font-size:14.2px;color:#fff;font-weight:normal;">0</div>
<div class="t" style="left:1074px;width:800px;text-align:right;top:419.68px;font-size:14.2px;color:#fff;font-weight:normal;">15.000</div>
<div class="t" style="left:1144px;width:800px;text-align:right;top:419.68px;font-size:14.2px;color:#fff;font-weight:normal;">12.000</div>
<div class="t" style="left:1214px;width:800px;text-align:right;top:419.68px;font-size:14.2px;color:#fff;font-weight:normal;">0</div>
<div class="t" style="left:1306px;width:800px;text-align:right;top:419.68px;font-size:14.2px;color:#fff;font-weight:normal;">0,0000</div>
<div class="t" style="left:1393px;width:800px;text-align:right;top:419.68px;font-size:14.2px;color:#fff;font-weight:normal;">0,000</div>
<div class="r" style="left:1500px;top:441px;width:687px;height:27px;background:#fbf9d8;"></div>
<div class="r" style="left:1878.5px;top:441px;width:68.79999999999995px;height:27px;background:#831710;"></div>
<div class="r" style="left:1500px;top:467px;width:687px;height:1px;background:#c6c6c6;"></div>
<div class="t" style="left:820px;width:800px;text-align:right;top:445.93px;font-size:14.2px;color:#000;font-weight:normal;">0,00</div>
<div class="t" style="left:912px;width:800px;text-align:right;top:445.93px;font-size:14.2px;color:#000;font-weight:normal;">0,00</div>
<div class="t" style="left:993px;width:800px;text-align:right;top:445.93px;font-size:14.2px;color:#000;font-weight:normal;">0</div>
<div class="t" style="left:1074px;width:800px;text-align:right;top:445.93px;font-size:14.2px;color:#000;font-weight:normal;">200</div>
<div class="t" style="left:1144px;width:800px;text-align:right;top:445.93px;font-size:14.2px;color:#fff;font-weight:normal;">100</div>
<div class="t" style="left:1214px;width:800px;text-align:right;top:445.93px;font-size:14.2px;color:#000;font-weight:normal;">4</div>
<div class="t" style="left:1306px;width:800px;text-align:right;top:445.93px;font-size:14.2px;color:#000;font-weight:normal;">0,0000</div>
<div class="t" style="left:1393px;width:800px;text-align:right;top:445.93px;font-size:14.2px;color:#000;font-weight:normal;">940,000</div>
<div class="r" style="left:1500px;top:468px;width:687px;height:26px;background:#fbf9d8;"></div>
<div class="r" style="left:1878.5px;top:468px;width:68.79999999999995px;height:26px;background:#831710;"></div>
<div class="r" style="left:1500px;top:493px;width:687px;height:1px;background:#c6c6c6;"></div>
<div class="t" style="left:820px;width:800px;text-align:right;top:472.18px;font-size:14.2px;color:#000;font-weight:normal;">0,00</div>
<div class="t" style="left:912px;width:800px;text-align:right;top:472.18px;font-size:14.2px;color:#000;font-weight:normal;">0,00</div>
<div class="t" style="left:993px;width:800px;text-align:right;top:472.18px;font-size:14.2px;color:#000;font-weight:normal;">0</div>
<div class="t" style="left:1074px;width:800px;text-align:right;top:472.18px;font-size:14.2px;color:#000;font-weight:normal;">5</div>
<div class="t" style="left:1144px;width:800px;text-align:right;top:472.18px;font-size:14.2px;color:#fff;font-weight:normal;">2</div>
<div class="t" style="left:1214px;width:800px;text-align:right;top:472.18px;font-size:14.2px;color:#000;font-weight:normal;">0</div>
<div class="t" style="left:1306px;width:800px;text-align:right;top:472.18px;font-size:14.2px;color:#000;font-weight:normal;">0,0000</div>
<div class="t" style="left:1393px;width:800px;text-align:right;top:472.18px;font-size:14.2px;color:#000;font-weight:normal;">163,300</div>
<div class="r" style="left:1500px;top:494px;width:687px;height:26px;background:#fbf9d8;"></div>
<div class="r" style="left:1878.5px;top:494px;width:68.79999999999995px;height:26px;background:#831710;"></div>
<div class="r" style="left:1500px;top:519px;width:687px;height:1px;background:#c6c6c6;"></div>
<div class="t" style="left:820px;width:800px;text-align:right;top:498.43px;font-size:14.2px;color:#000;font-weight:normal;">0,00</div>
<div class="t" style="left:912px;width:800px;text-align:right;top:498.43px;font-size:14.2px;color:#000;font-weight:normal;">0,00</div>
<div class="t" style="left:993px;width:800px;text-align:right;top:498.43px;font-size:14.2px;color:#000;font-weight:normal;">0</div>
<div class="t" style="left:1074px;width:800px;text-align:right;top:498.43px;font-size:14.2px;color:#000;font-weight:normal;">300</div>
<div class="t" style="left:1144px;width:800px;text-align:right;top:498.43px;font-size:14.2px;color:#fff;font-weight:normal;">80</div>
<div class="t" style="left:1214px;width:800px;text-align:right;top:498.43px;font-size:14.2px;color:#000;font-weight:normal;">0</div>
<div class="t" style="left:1306px;width:800px;text-align:right;top:498.43px;font-size:14.2px;color:#000;font-weight:normal;">0,0000</div>
<div class="t" style="left:1393px;width:800px;text-align:right;top:498.43px;font-size:14.2px;color:#000;font-weight:normal;">2.660,00</div>
<div class="r" style="left:1500px;top:520px;width:687px;height:26px;background:#fbf9d8;"></div>
<div class="r" style="left:1878.5px;top:520px;width:68.79999999999995px;height:26px;background:#831710;"></div>
<div class="r" style="left:1500px;top:545px;width:687px;height:1px;background:#c6c6c6;"></div>
<div class="t" style="left:820px;width:800px;text-align:right;top:524.68px;font-size:14.2px;color:#000;font-weight:normal;">0,00</div>
<div class="t" style="left:912px;width:800px;text-align:right;top:524.68px;font-size:14.2px;color:#000;font-weight:normal;">0,00</div>
<div class="t" style="left:993px;width:800px;text-align:right;top:524.68px;font-size:14.2px;color:#000;font-weight:normal;">0</div>
<div class="t" style="left:1074px;width:800px;text-align:right;top:524.68px;font-size:14.2px;color:#000;font-weight:normal;">30</div>
<div class="t" style="left:1144px;width:800px;text-align:right;top:524.68px;font-size:14.2px;color:#fff;font-weight:normal;">10</div>
<div class="t" style="left:1214px;width:800px;text-align:right;top:524.68px;font-size:14.2px;color:#000;font-weight:normal;">0</div>
<div class="t" style="left:1306px;width:800px;text-align:right;top:524.68px;font-size:14.2px;color:#000;font-weight:normal;">0,0000</div>
<div class="t" style="left:1393px;width:800px;text-align:right;top:524.68px;font-size:14.2px;color:#000;font-weight:normal;">660,000</div>
<div class="r" style="left:1500px;top:546px;width:687px;height:26px;background:#fbf9d8;"></div>
<div class="r" style="left:1878.5px;top:546px;width:68.79999999999995px;height:26px;background:#831710;"></div>
<div class="r" style="left:1500px;top:571px;width:687px;height:1px;background:#c6c6c6;"></div>
<div class="t" style="left:820px;width:800px;text-align:right;top:550.93px;font-size:14.2px;color:#000;font-weight:normal;">0,00</div>
<div class="t" style="left:912px;width:800px;text-align:right;top:550.93px;font-size:14.2px;color:#000;font-weight:normal;">0,00</div>
<div class="t" style="left:993px;width:800px;text-align:right;top:550.93px;font-size:14.2px;color:#000;font-weight:normal;">0</div>
<div class="t" style="left:1074px;width:800px;text-align:right;top:550.93px;font-size:14.2px;color:#000;font-weight:normal;">20</div>
<div class="t" style="left:1144px;width:800px;text-align:right;top:550.93px;font-size:14.2px;color:#fff;font-weight:normal;">10</div>
<div class="t" style="left:1214px;width:800px;text-align:right;top:550.93px;font-size:14.2px;color:#000;font-weight:normal;">0</div>
<div class="t" style="left:1306px;width:800px;text-align:right;top:550.93px;font-size:14.2px;color:#000;font-weight:normal;">0,0000</div>
<div class="t" style="left:1393px;width:800px;text-align:right;top:550.93px;font-size:14.2px;color:#000;font-weight:normal;">251,000</div>
<div class="r" style="left:1500px;top:572px;width:687px;height:27px;background:#c0605b;"></div>
<div class="r" style="left:1878.5px;top:572px;width:68.79999999999995px;height:27px;background:#831710;"></div>
<div class="r" style="left:1500px;top:598px;width:687px;height:1px;background:#c6c6c6;"></div>
<div class="t" style="left:820px;width:800px;text-align:right;top:577.18px;font-size:14.2px;color:#fff;font-weight:normal;">0,00</div>
<div class="t" style="left:912px;width:800px;text-align:right;top:577.18px;font-size:14.2px;color:#fff;font-weight:normal;">100,00</div>
<div class="t" style="left:993px;width:800px;text-align:right;top:577.18px;font-size:14.2px;color:#fff;font-weight:normal;">0</div>
<div class="t" style="left:1074px;width:800px;text-align:right;top:577.18px;font-size:14.2px;color:#fff;font-weight:normal;">100</div>
<div class="t" style="left:1144px;width:800px;text-align:right;top:577.18px;font-size:14.2px;color:#fff;font-weight:normal;">80</div>
<div class="t" style="left:1214px;width:800px;text-align:right;top:577.18px;font-size:14.2px;color:#fff;font-weight:normal;">0</div>
<div class="t" style="left:1306px;width:800px;text-align:right;top:577.18px;font-size:14.2px;color:#fff;font-weight:normal;">0,0000</div>
<div class="t" style="left:1393px;width:800px;text-align:right;top:577.18px;font-size:14.2px;color:#fff;font-weight:normal;">885,000</div>
<div class="r" style="left:1500px;top:599px;width:687px;height:26px;background:#fbf9d8;"></div>
<div class="r" style="left:1878.5px;top:599px;width:68.79999999999995px;height:26px;background:#831710;"></div>
<div class="r" style="left:1500px;top:624px;width:687px;height:1px;background:#c6c6c6;"></div>
<div class="t" style="left:820px;width:800px;text-align:right;top:603.43px;font-size:14.2px;color:#000;font-weight:normal;">0,00</div>
<div class="t" style="left:912px;width:800px;text-align:right;top:603.43px;font-size:14.2px;color:#000;font-weight:normal;">0,00</div>
<div class="t" style="left:993px;width:800px;text-align:right;top:603.43px;font-size:14.2px;color:#000;font-weight:normal;">0</div>
<div class="t" style="left:1074px;width:800px;text-align:right;top:603.43px;font-size:14.2px;color:#000;font-weight:normal;">5</div>
<div class="t" style="left:1144px;width:800px;text-align:right;top:603.43px;font-size:14.2px;color:#fff;font-weight:normal;">2</div>
<div class="t" style="left:1214px;width:800px;text-align:right;top:603.43px;font-size:14.2px;color:#000;font-weight:normal;">0</div>
<div class="t" style="left:1306px;width:800px;text-align:right;top:603.43px;font-size:14.2px;color:#000;font-weight:normal;">0,0000</div>
<div class="t" style="left:1393px;width:800px;text-align:right;top:603.43px;font-size:14.2px;color:#000;font-weight:normal;">71,000</div>
<div class="r" style="left:1500px;top:625px;width:687px;height:26px;background:#fbf9d8;"></div>
<div class="r" style="left:1878.5px;top:625px;width:68.79999999999995px;height:26px;background:#831710;"></div>
<div class="r" style="left:1500px;top:650px;width:687px;height:1px;background:#c6c6c6;"></div>
<div class="t" style="left:820px;width:800px;text-align:right;top:629.68px;font-size:14.2px;color:#000;font-weight:normal;">0,00</div>
<div class="t" style="left:912px;width:800px;text-align:right;top:629.68px;font-size:14.2px;color:#000;font-weight:normal;">0,00</div>
<div class="t" style="left:993px;width:800px;text-align:right;top:629.68px;font-size:14.2px;color:#000;font-weight:normal;">0</div>
<div class="t" style="left:1074px;width:800px;text-align:right;top:629.68px;font-size:14.2px;color:#000;font-weight:normal;">2</div>
<div class="t" style="left:1144px;width:800px;text-align:right;top:629.68px;font-size:14.2px;color:#fff;font-weight:normal;">1</div>
<div class="t" style="left:1214px;width:800px;text-align:right;top:629.68px;font-size:14.2px;color:#000;font-weight:normal;">0</div>
<div class="t" style="left:1306px;width:800px;text-align:right;top:629.68px;font-size:14.2px;color:#000;font-weight:normal;">0,0000</div>
<div class="t" style="left:1393px;width:800px;text-align:right;top:629.68px;font-size:14.2px;color:#000;font-weight:normal;">0,000</div>
<div class="r" style="left:1500px;top:651px;width:687px;height:27px;background:#fbf9d8;"></div>
<div class="r" style="left:1878.5px;top:651px;width:68.79999999999995px;height:27px;background:#831710;"></div>
<div class="r" style="left:1500px;top:677px;width:687px;height:1px;background:#c6c6c6;"></div>
<div class="t" style="left:820px;width:800px;text-align:right;top:655.93px;font-size:14.2px;color:#000;font-weight:normal;">0,00</div>
<div class="t" style="left:912px;width:800px;text-align:right;top:655.93px;font-size:14.2px;color:#000;font-weight:normal;">0,00</div>
<div class="t" style="left:993px;width:800px;text-align:right;top:655.93px;font-size:14.2px;color:#000;font-weight:normal;">0</div>
<div class="t" style="left:1074px;width:800px;text-align:right;top:655.93px;font-size:14.2px;color:#000;font-weight:normal;">2</div>
<div class="t" style="left:1144px;width:800px;text-align:right;top:655.93px;font-size:14.2px;color:#fff;font-weight:normal;">1</div>
<div class="t" style="left:1214px;width:800px;text-align:right;top:655.93px;font-size:14.2px;color:#000;font-weight:normal;">0</div>
<div class="t" style="left:1306px;width:800px;text-align:right;top:655.93px;font-size:14.2px;color:#000;font-weight:normal;">0,0000</div>
<div class="t" style="left:1393px;width:800px;text-align:right;top:655.93px;font-size:14.2px;color:#000;font-weight:normal;">0,000</div>
<div class="r" style="left:1500px;top:678px;width:687px;height:26px;background:#fbf9d8;"></div>
<div class="r" style="left:1878.5px;top:678px;width:68.79999999999995px;height:26px;background:#831710;"></div>
<div class="r" style="left:1500px;top:703px;width:687px;height:1px;background:#c6c6c6;"></div>
<div class="t" style="left:820px;width:800px;text-align:right;top:682.18px;font-size:14.2px;color:#000;font-weight:normal;">0,00</div>
<div class="t" style="left:912px;width:800px;text-align:right;top:682.18px;font-size:14.2px;color:#000;font-weight:normal;">0,00</div>
<div class="t" style="left:993px;width:800px;text-align:right;top:682.18px;font-size:14.2px;color:#000;font-weight:normal;">0</div>
<div class="t" style="left:1074px;width:800px;text-align:right;top:682.18px;font-size:14.2px;color:#000;font-weight:normal;">2</div>
<div class="t" style="left:1144px;width:800px;text-align:right;top:682.18px;font-size:14.2px;color:#fff;font-weight:normal;">1</div>
<div class="t" style="left:1214px;width:800px;text-align:right;top:682.18px;font-size:14.2px;color:#000;font-weight:normal;">0</div>
<div class="t" style="left:1306px;width:800px;text-align:right;top:682.18px;font-size:14.2px;color:#000;font-weight:normal;">0,0000</div>
<div class="t" style="left:1393px;width:800px;text-align:right;top:682.18px;font-size:14.2px;color:#000;font-weight:normal;">0,000</div>
<div class="r" style="left:1500px;top:704px;width:687px;height:26px;background:#fbf9d8;"></div>
<div class="r" style="left:1878.5px;top:704px;width:68.79999999999995px;height:26px;background:#831710;"></div>
<div class="r" style="left:1500px;top:729px;width:687px;height:1px;background:#c6c6c6;"></div>
<div class="t" style="left:820px;width:800px;text-align:right;top:708.43px;font-size:14.2px;color:#000;font-weight:normal;">0,00</div>
<div class="t" style="left:912px;width:800px;text-align:right;top:708.43px;font-size:14.2px;color:#000;font-weight:normal;">0,00</div>
<div class="t" style="left:993px;width:800px;text-align:right;top:708.43px;font-size:14.2px;color:#000;font-weight:normal;">0</div>
<div class="t" style="left:1074px;width:800px;text-align:right;top:708.43px;font-size:14.2px;color:#000;font-weight:normal;">2</div>
<div class="t" style="left:1144px;width:800px;text-align:right;top:708.43px;font-size:14.2px;color:#fff;font-weight:normal;">1</div>
<div class="t" style="left:1214px;width:800px;text-align:right;top:708.43px;font-size:14.2px;color:#000;font-weight:normal;">0</div>
<div class="t" style="left:1306px;width:800px;text-align:right;top:708.43px;font-size:14.2px;color:#000;font-weight:normal;">0,0000</div>
<div class="t" style="left:1393px;width:800px;text-align:right;top:708.43px;font-size:14.2px;color:#000;font-weight:normal;">0,000</div>
<div class="r" style="left:1500px;top:730px;width:687px;height:26px;background:#fbf9d8;"></div>
<div class="r" style="left:1878.5px;top:730px;width:68.79999999999995px;height:26px;background:#831710;"></div>
<div class="r" style="left:1500px;top:755px;width:687px;height:1px;background:#c6c6c6;"></div>
<div class="t" style="left:820px;width:800px;text-align:right;top:734.68px;font-size:14.2px;color:#000;font-weight:normal;">0,00</div>
<div class="t" style="left:912px;width:800px;text-align:right;top:734.68px;font-size:14.2px;color:#000;font-weight:normal;">0,00</div>
<div class="t" style="left:993px;width:800px;text-align:right;top:734.68px;font-size:14.2px;color:#000;font-weight:normal;">0</div>
<div class="t" style="left:1074px;width:800px;text-align:right;top:734.68px;font-size:14.2px;color:#000;font-weight:normal;">2</div>
<div class="t" style="left:1144px;width:800px;text-align:right;top:734.68px;font-size:14.2px;color:#fff;font-weight:normal;">1</div>
<div class="t" style="left:1214px;width:800px;text-align:right;top:734.68px;font-size:14.2px;color:#000;font-weight:normal;">0</div>
<div class="t" style="left:1306px;width:800px;text-align:right;top:734.68px;font-size:14.2px;color:#000;font-weight:normal;">0,0000</div>
<div class="t" style="left:1393px;width:800px;text-align:right;top:734.68px;font-size:14.2px;color:#000;font-weight:normal;">0,000</div>
<div class="r" style="left:1500px;top:756px;width:687px;height:26px;background:#fbf9d8;"></div>
<div class="r" style="left:1878.5px;top:756px;width:68.79999999999995px;height:26px;background:#831710;"></div>
<div class="r" style="left:1500px;top:781px;width:687px;height:1px;background:#c6c6c6;"></div>
<div class="t" style="left:820px;width:800px;text-align:right;top:760.93px;font-size:14.2px;color:#000;font-weight:normal;">0,00</div>
<div class="t" style="left:912px;width:800px;text-align:right;top:760.93px;font-size:14.2px;color:#000;font-weight:normal;">0,00</div>
<div class="t" style="left:993px;width:800px;text-align:right;top:760.93px;font-size:14.2px;color:#000;font-weight:normal;">0</div>
<div class="t" style="left:1074px;width:800px;text-align:right;top:760.93px;font-size:14.2px;color:#000;font-weight:normal;">2</div>
<div class="t" style="left:1144px;width:800px;text-align:right;top:760.93px;font-size:14.2px;color:#fff;font-weight:normal;">1</div>
<div class="t" style="left:1214px;width:800px;text-align:right;top:760.93px;font-size:14.2px;color:#000;font-weight:normal;">0</div>
<div class="t" style="left:1306px;width:800px;text-align:right;top:760.93px;font-size:14.2px;color:#000;font-weight:normal;">0,0000</div>
<div class="t" style="left:1393px;width:800px;text-align:right;top:760.93px;font-size:14.2px;color:#000;font-weight:normal;">0,000</div>
<div class="r" style="left:1500px;top:782px;width:687px;height:27px;background:#fbf9d8;"></div>
<div class="r" style="left:1878.5px;top:782px;width:68.79999999999995px;height:27px;background:#831710;"></div>
<div class="r" style="left:1500px;top:808px;width:687px;height:1px;background:#c6c6c6;"></div>
<div class="t" style="left:820px;width:800px;text-align:right;top:787.18px;font-size:14.2px;color:#000;font-weight:normal;">0,00</div>
<div class="t" style="left:912px;width:800px;text-align:right;top:787.18px;font-size:14.2px;color:#000;font-weight:normal;">0,00</div>
<div class="t" style="left:993px;width:800px;text-align:right;top:787.18px;font-size:14.2px;color:#000;font-weight:normal;">0</div>
<div class="t" style="left:1074px;width:800px;text-align:right;top:787.18px;font-size:14.2px;color:#000;font-weight:normal;">2</div>
<div class="t" style="left:1144px;width:800px;text-align:right;top:787.18px;font-size:14.2px;color:#fff;font-weight:normal;">1</div>
<div class="t" style="left:1214px;width:800px;text-align:right;top:787.18px;font-size:14.2px;color:#000;font-weight:normal;">0</div>
<div class="t" style="left:1306px;width:800px;text-align:right;top:787.18px;font-size:14.2px;color:#000;font-weight:normal;">0,0000</div>
<div class="t" style="left:1393px;width:800px;text-align:right;top:787.18px;font-size:14.2px;color:#000;font-weight:normal;">0,000</div>
<div class="r" style="left:1500px;top:809px;width:687px;height:26px;background:#fbf9d8;"></div>
<div class="r" style="left:1878.5px;top:809px;width:68.79999999999995px;height:26px;background:#831710;"></div>
<div class="r" style="left:1500px;top:834px;width:687px;height:1px;background:#c6c6c6;"></div>
<div class="t" style="left:820px;width:800px;text-align:right;top:813.43px;font-size:14.2px;color:#000;font-weight:normal;">0,00</div>
<div class="t" style="left:912px;width:800px;text-align:right;top:813.43px;font-size:14.2px;color:#000;font-weight:normal;">0,00</div>
<div class="t" style="left:993px;width:800px;text-align:right;top:813.43px;font-size:14.2px;color:#000;font-weight:normal;">0</div>
<div class="t" style="left:1074px;width:800px;text-align:right;top:813.43px;font-size:14.2px;color:#000;font-weight:normal;">2</div>
<div class="t" style="left:1144px;width:800px;text-align:right;top:813.43px;font-size:14.2px;color:#fff;font-weight:normal;">1</div>
<div class="t" style="left:1214px;width:800px;text-align:right;top:813.43px;font-size:14.2px;color:#000;font-weight:normal;">0</div>
<div class="t" style="left:1306px;width:800px;text-align:right;top:813.43px;font-size:14.2px;color:#000;font-weight:normal;">0,0000</div>
<div class="t" style="left:1393px;width:800px;text-align:right;top:813.43px;font-size:14.2px;color:#000;font-weight:normal;">0,000</div>
<div class="r" style="left:1500px;top:835px;width:687px;height:26px;background:#fbf9d8;"></div>
<div class="r" style="left:1878.5px;top:835px;width:68.79999999999995px;height:26px;background:#831710;"></div>
<div class="r" style="left:1500px;top:860px;width:687px;height:1px;background:#c6c6c6;"></div>
<div class="t" style="left:820px;width:800px;text-align:right;top:839.68px;font-size:14.2px;color:#000;font-weight:normal;">0,00</div>
<div class="t" style="left:912px;width:800px;text-align:right;top:839.68px;font-size:14.2px;color:#000;font-weight:normal;">0,00</div>
<div class="t" style="left:993px;width:800px;text-align:right;top:839.68px;font-size:14.2px;color:#000;font-weight:normal;">0</div>
<div class="t" style="left:1074px;width:800px;text-align:right;top:839.68px;font-size:14.2px;color:#000;font-weight:normal;">2</div>
<div class="t" style="left:1144px;width:800px;text-align:right;top:839.68px;font-size:14.2px;color:#fff;font-weight:normal;">1</div>
<div class="t" style="left:1214px;width:800px;text-align:right;top:839.68px;font-size:14.2px;color:#000;font-weight:normal;">0</div>
<div class="t" style="left:1306px;width:800px;text-align:right;top:839.68px;font-size:14.2px;color:#000;font-weight:normal;">0,0000</div>
<div class="t" style="left:1393px;width:800px;text-align:right;top:839.68px;font-size:14.2px;color:#000;font-weight:normal;">0,000</div>
<div class="r" style="left:1623px;top:389px;width:1px;height:471px;background:#c6c6c6;"></div>
<div class="r" style="left:1715px;top:389px;width:1px;height:471px;background:#c6c6c6;"></div>
<div class="r" style="left:1796px;top:389px;width:1px;height:471px;background:#c6c6c6;"></div>
<div class="r" style="left:1877px;top:389px;width:1px;height:471px;background:#c6c6c6;"></div>
<div class="r" style="left:1947px;top:389px;width:1px;height:471px;background:#c6c6c6;"></div>
<div class="r" style="left:2017px;top:389px;width:1px;height:471px;background:#c6c6c6;"></div>
<div class="r" style="left:2109px;top:389px;width:1px;height:471px;background:#c6c6c6;"></div>
<div class="r" style="left:1500px;top:414px;width:687px;height:1px;background:#a8a8a8;"></div>
<div class="t" style="left:1626px;top:393.14px;font-size:14.6px;color:#111;font-weight:normal;">Reserviert</div>
<div class="t" style="left:1718px;top:393.14px;font-size:14.6px;color:#111;font-weight:normal;">Bestellt</div>
<div class="t" style="left:1799px;top:393.14px;font-size:14.6px;color:#111;font-weight:normal;">Meldebest.</div>
<div class="t" style="left:1880px;top:393.14px;font-size:14.6px;color:#111;font-weight:normal;">Mindest.</div>
<div class="t" style="left:1950px;top:393.14px;font-size:14.6px;color:#111;font-weight:normal;">Lieferzeit</div>
<div class="t" style="left:2020px;top:393.14px;font-size:14.6px;color:#111;font-weight:normal;">MEK netto</div>
<div class="t" style="left:2112px;top:393.14px;font-size:14.6px;color:#111;font-weight:normal;">EK1 netto</div>
<div class="r" style="left:2187px;top:389px;width:20px;height:728px;background:#f0f0f0;"></div>
<div class="r" style="left:2189px;top:408px;width:16px;height:40px;background:#cdcdcd;"></div>
<svg class="r" style="left:2190px;top:392px" width="14" height="12" viewBox="0 0 14 12"><path d="M3 8 L7 4 L11 8" fill="none" stroke="#555" stroke-width="1.8"/></svg>
<svg class="r" style="left:2190px;top:1100px" width="14" height="12" viewBox="0 0 14 12"><path d="M3 4 L7 8 L11 4" fill="none" stroke="#555" stroke-width="1.8"/></svg>
<div class="r" style="left:681px;top:1117px;width:1526px;height:19px;background:#f0f0f0;"></div>
<div class="r" style="left:700px;top:1118px;width:99px;height:17px;background:#cdcdcd;"></div>
<svg class="r" style="left:683px;top:1119px" width="14" height="14" viewBox="0 0 14 14"><path d="M9 3 L5 7 L9 11" fill="none" stroke="#555" stroke-width="2"/></svg>
<svg class="r" style="left:2190px;top:1119px" width="14" height="14" viewBox="0 0 14 14"><path d="M5 3 L9 7 L5 11" fill="none" stroke="#555" stroke-width="2"/></svg>
<div class="r" style="left:677px;top:1147px;width:134px;height:34px;box-sizing:border-box;background:#cccccc;border:1px solid #bfbfbf;"></div>
<div class="t" style="left:344.0px;width:800px;text-align:center;top:1156.64px;font-size:14.6px;color:#8a8a8a;font-weight:normal;">Werksauftrag</div>
<div class="r" style="left:819px;top:1147px;width:135px;height:34px;box-sizing:border-box;background:#e1e1e1;border:1px solid #adadad;"></div>
<div class="t" style="left:486.5px;width:800px;text-align:center;top:1156.64px;font-size:14.6px;color:#1a1a1a;font-weight:normal;">Anfrage</div>
<div class="r" style="left:962px;top:1147px;width:190px;height:34px;box-sizing:border-box;background:#e1e1e1;border:1px solid #adadad;"></div>
<div class="t" style="left:657.0px;width:800px;text-align:center;top:1156.64px;font-size:14.6px;color:#1a1a1a;font-weight:normal;">Bestellen Lieferant wählen</div>
<div class="r" style="left:1161px;top:1147px;width:175px;height:34px;box-sizing:border-box;background:#cccccc;border:1px solid #bfbfbf;"></div>
<div class="t" style="left:848.5px;width:800px;text-align:center;top:1156.64px;font-size:14.6px;color:#8a8a8a;font-weight:normal;">Bestellen Lieferant 2</div>
<div class="r" style="left:1344px;top:1147px;width:175px;height:34px;box-sizing:border-box;background:#cccccc;border:1px solid #bfbfbf;"></div>
<div class="t" style="left:1031.5px;width:800px;text-align:center;top:1156.64px;font-size:14.6px;color:#8a8a8a;font-weight:normal;">Bestellen Lieferant 1</div>
<div class="t" style="left:1406px;width:800px;text-align:right;top:1161.30px;font-size:15px;color:#1a1a1a;font-weight:normal;">Summe EK1 0,00 EUR, EK2 0,00 EUR</div>
<div class="r" style="left:342px;top:248px;width:1252px;height:760px;box-sizing:border-box;background:#d6e4f2;border:2px solid #6a6a6a;border-radius:7px 7px 0 0;"></div>
<div class="r" style="left:344px;top:250px;width:1248px;height:33px;background:linear-gradient(#c3d2e2,#dae6f3);border-radius:5px 5px 0 0;"></div>
<div class="r" style="left:351px;top:283px;width:1234px;height:716px;background:#f0f0f0;"></div>
<div class="r" style="left:1468px;top:260px;width:36.5px;height:20.5px;box-sizing:border-box;background:rgba(255,255,255,0.08);border:1.5px solid #8e9bb0;border-radius:3px;"></div>
<svg class="r" style="left:1478px;top:264px" width="16" height="12" viewBox="0 0 16 12"><rect x="2" y="7.5" width="12" height="4.5" rx="1.5" fill="#fafafa" stroke="#555" stroke-width="1.3"/></svg>
<div class="r" style="left:1507.5px;top:260px;width:35.5px;height:20.5px;box-sizing:border-box;background:rgba(255,255,255,0.08);border:1.5px solid #8e9bb0;border-radius:3px;"></div>
<svg class="r" style="left:1517px;top:264px" width="16" height="12" viewBox="0 0 16 12"><rect x="2.2" y="0.8" width="11.5" height="10" rx="1.5" fill="#fafafa" stroke="#555" stroke-width="1.5"/><rect x="5.5" y="4" width="5" height="3" fill="#fff" stroke="#555" stroke-width="1.2"/></svg>
<div class="r" style="left:1546px;top:260px;width:36.5px;height:20.5px;box-sizing:border-box;background:rgba(255,255,255,0.08);border:1.5px solid #8e9bb0;border-radius:3px;"></div>
<svg class="r" style="left:1556px;top:264px" width="16" height="12" viewBox="0 0 16 12"><path d="M3.5 1.5 L12.5 10.5 M12.5 1.5 L3.5 10.5" stroke="#555" stroke-width="4.2" stroke-linecap="round"/><path d="M3.5 1.5 L12.5 10.5 M12.5 1.5 L3.5 10.5" stroke="#fafafa" stroke-width="2.2" stroke-linecap="round"/></svg>
<svg class="r" style="left:354px;top:262px" width="18" height="16" viewBox="0 0 18 16"><rect x="0.5" y="0.5" width="17" height="15" rx="1.5" fill="#f4f4f4" stroke="#a0a0a0"/><rect x="1" y="1" width="16" height="3" fill="#8a4fb5"/><rect x="3" y="6" width="4" height="1.5" fill="#666"/><rect x="8" y="6" width="7" height="1.5" fill="#999"/><rect x="3" y="9" width="4" height="1.5" fill="#666"/><rect x="8" y="9" width="7" height="1.5" fill="#999"/><rect x="3" y="12" width="3" height="1.5" fill="#333"/></svg>
<div class="t" style="left:376.3px;top:264.32px;font-size:13.8px;color:#9a9a9a;font-weight:normal;">Karl Nordmann</div>
<div class="r" style="left:455.7px;top:315.5px;width:1116.3px;height:350.0px;box-sizing:border-box;background:#f8f8f8;border:1px solid #dadada;"></div>
<div class="r" style="left:455.7px;top:289px;width:101.30000000000001px;height:27.5px;box-sizing:border-box;background:#fff;border:1px solid #dadada;border-bottom:none;"></div>
<div class="t" style="left:463.7px;top:296.64px;font-size:14.6px;color:#1a1a1a;font-weight:normal;">Stammdaten</div>
<div class="r" style="left:557px;top:292px;width:58.39999999999998px;height:24px;box-sizing:border-box;background:#f0f0f0;border:1px solid #dadada;border-bottom:none;"></div>
<div class="t" style="left:562.5px;top:297.64px;font-size:14.6px;color:#1a1a1a;font-weight:normal;">Details</div>
<div class="r" style="left:614.4px;top:292px;width:76.60000000000002px;height:24px;box-sizing:border-box;background:#f0f0f0;border:1px solid #dadada;border-bottom:none;"></div>
<div class="t" style="left:619.9px;top:297.64px;font-size:14.6px;color:#1a1a1a;font-weight:normal;">Angebote</div>
<div class="r" style="left:690px;top:292px;width:70px;height:24px;box-sizing:border-box;background:#f0f0f0;border:1px solid #dadada;border-bottom:none;"></div>
<div class="t" style="left:695.5px;top:297.64px;font-size:14.6px;color:#1a1a1a;font-weight:normal;">Aufträge</div>
<div class="r" style="left:759px;top:292px;width:97.20000000000005px;height:24px;box-sizing:border-box;background:#f0f0f0;border:1px solid #dadada;border-bottom:none;"></div>
<div class="t" style="left:764.5px;top:297.64px;font-size:14.6px;color:#1a1a1a;font-weight:normal;">Rechnungen</div>
<div class="r" style="left:855.2px;top:292px;width:73.79999999999995px;height:24px;box-sizing:border-box;background:#f0f0f0;border:1px solid #dadada;border-bottom:none;"></div>
<div class="t" style="left:860.7px;top:297.64px;font-size:14.6px;color:#1a1a1a;font-weight:normal;">Kontakte</div>
<div class="r" style="left:928px;top:292px;width:65.39999999999998px;height:24px;box-sizing:border-box;background:#f0f0f0;border:1px solid #dadada;border-bottom:none;"></div>
<div class="t" style="left:933.5px;top:297.64px;font-size:14.6px;color:#1a1a1a;font-weight:normal;">Katalog</div>
<div class="r" style="left:992.4px;top:292px;width:76.00000000000011px;height:24px;box-sizing:border-box;background:#f0f0f0;border:1px solid #dadada;border-bottom:none;"></div>
<div class="t" style="left:997.9px;top:297.64px;font-size:14.6px;color:#1a1a1a;font-weight:normal;">Vorgänge</div>
<div class="r" style="left:1067.4px;top:292px;width:73.89999999999986px;height:24px;box-sizing:border-box;background:#f0f0f0;border:1px solid #dadada;border-bottom:none;"></div>
<div class="t" style="left:1072.9px;top:297.64px;font-size:14.6px;color:#1a1a1a;font-weight:normal;">Retouren</div>
<div class="r" style="left:1140.3px;top:292px;width:63.5px;height:24px;box-sizing:border-box;background:#f0f0f0;border:1px solid #dadada;border-bottom:none;"></div>
<div class="t" style="left:1145.8px;top:297.64px;font-size:14.6px;color:#1a1a1a;font-weight:normal;">Tickets</div>
<div class="r" style="left:1202.8px;top:292px;width:60.200000000000045px;height:24px;box-sizing:border-box;background:#f0f0f0;border:1px solid #dadada;border-bottom:none;"></div>
<div class="t" style="left:1208.3px;top:297.64px;font-size:14.6px;color:#1a1a1a;font-weight:normal;">Medien</div>
<div class="r" style="left:456px;top:697px;width:1116px;height:287px;box-sizing:border-box;background:#f8f8f8;border:1px solid #dadada;"></div>
<div class="r" style="left:456px;top:670.5px;width:101px;height:27.5px;box-sizing:border-box;background:#fff;border:1px solid #dadada;border-bottom:none;"></div>
<div class="t" style="left:464px;top:678.14px;font-size:14.6px;color:#1a1a1a;font-weight:normal;">Stammdaten</div>
<div class="r" style="left:557px;top:673.5px;width:105px;height:24.0px;box-sizing:border-box;background:#f0f0f0;border:1px solid #dadada;border-bottom:none;"></div>
<div class="t" style="left:562.5px;top:679.14px;font-size:14.6px;color:#1a1a1a;font-weight:normal;">Artikel Details</div>
<div class="r" style="left:661px;top:673.5px;width:81px;height:24.0px;box-sizing:border-box;background:#f0f0f0;border:1px solid #dadada;border-bottom:none;"></div>
<div class="t" style="left:666.5px;top:679.14px;font-size:14.6px;color:#1a1a1a;font-weight:normal;">Stückliste</div>
<div class="r" style="left:741px;top:673.5px;width:104.60000000000002px;height:24.0px;box-sizing:border-box;background:#f0f0f0;border:1px solid #dadada;border-bottom:none;"></div>
<div class="t" style="left:746.5px;top:679.14px;font-size:14.6px;color:#1a1a1a;font-weight:normal;">Lager/Einkauf</div>
<div class="r" style="left:844.6px;top:673.5px;width:100.39999999999998px;height:24.0px;box-sizing:border-box;background:#f0f0f0;border:1px solid #dadada;border-bottom:none;"></div>
<div class="t" style="left:850.1px;top:679.14px;font-size:14.6px;color:#1a1a1a;font-weight:normal;">Bestellungen</div>
<div class="r" style="left:944px;top:673.5px;width:76.39999999999998px;height:24.0px;box-sizing:border-box;background:#f0f0f0;border:1px solid #dadada;border-bottom:none;"></div>
<div class="t" style="left:949.5px;top:679.14px;font-size:14.6px;color:#1a1a1a;font-weight:normal;">Vorgänge</div>
<div class="r" style="left:1019.4px;top:673.5px;width:70.00000000000011px;height:24.0px;box-sizing:border-box;background:#f0f0f0;border:1px solid #dadada;border-bottom:none;"></div>
<div class="t" style="left:1024.9px;top:679.14px;font-size:14.6px;color:#1a1a1a;font-weight:normal;">Chargen</div>
<div class="r" style="left:1088.4px;top:673.5px;width:89.09999999999991px;height:24.0px;box-sizing:border-box;background:#f0f0f0;border:1px solid #dadada;border-bottom:none;"></div>
<div class="t" style="left:1093.9px;top:679.14px;font-size:14.6px;color:#1a1a1a;font-weight:normal;">FIFO-Lager</div>
<div class="r" style="left:1176.5px;top:673.5px;width:59.799999999999955px;height:24.0px;box-sizing:border-box;background:#f0f0f0;border:1px solid #dadada;border-bottom:none;"></div>
<div class="t" style="left:1182.0px;top:679.14px;font-size:14.6px;color:#1a1a1a;font-weight:normal;">Medien</div>
<svg class="r" style="left:360px;top:290px" width="90" height="180" viewBox="0 0 90 180"><circle cx="35.89999999999998" cy="21.100000000000023" r="14" fill="#767676"/><path d="M18.30000000000001 49.60000000000002 C18.30000000000001 35.80000000000001 26.30000000000001 33.80000000000001 35.150000000000006 33.80000000000001 C44 33.80000000000001 52 35.80000000000001 52 49.60000000000002 C52 55.60000000000002 48 55.60000000000002 42 55.60000000000002 H26.30000000000001 C20.30000000000001 55.60000000000002 18.30000000000001 55.60000000000002 18.30000000000001 49.60000000000002Z" fill="#767676"/><path d="M23.899999999999977 34.30000000000001 H47.89999999999998" stroke="#fff" stroke-width="0.8" opacity="0.6"/><g transform="translate(42.3,59.2) rotate(-44)"><path d="M0 0 L7 -4 H36 V4 H7Z" fill="#5581bd"/><path d="M2 0 L7 -2.5 V2.5Z" fill="#fff"/><path d="M10 -1 H33 V1 H10Z" fill="#fff" opacity="0.7"/><rect x="37" y="-4" width="7" height="8" fill="#e07f90"/></g><circle cx="33.80000000000001" cy="128.89999999999998" r="14" fill="#767676"/><path d="M16.19999999999999 158.10000000000002 C16.19999999999999 145.7 24.19999999999999 143.7 33.44999999999999 143.7 C42.69999999999999 143.7 50.69999999999999 145.7 50.69999999999999 158.10000000000002 C50.69999999999999 164.10000000000002 46.69999999999999 164.10000000000002 40.69999999999999 164.10000000000002 H24.19999999999999 C18.19999999999999 164.10000000000002 16.19999999999999 164.10000000000002 16.19999999999999 158.10000000000002Z" fill="#767676"/><path d="M21.80000000000001 144.2 H45.80000000000001" stroke="#fff" stroke-width="0.8" opacity="0.6"/><rect x="45.80000000000001" y="153.5" width="23.2" height="7" fill="#5581bd"/><rect x="53.89999999999998" y="145.8" width="7" height="22.5" fill="#5581bd"/></svg>
<div class="t" style="left:-1.5px;width:800px;text-align:center;top:356.47px;font-size:12.2px;color:#1a1a1a;font-weight:normal;">Kunde</div>
<div class="t" style="left:-1.5px;width:800px;text-align:center;top:373.37px;font-size:12.2px;color:#1a1a1a;font-weight:normal;">bearbeiten</div>
<div class="t" style="left:-1.5px;width:800px;text-align:center;top:466.37px;font-size:12.2px;color:#1a1a1a;font-weight:normal;">Kunde</div>
<div class="t" style="left:-1.5px;width:800px;text-align:center;top:483.47px;font-size:12.2px;color:#1a1a1a;font-weight:normal;">anlegen (F3)</div>
<svg class="r" style="left:360px;top:500px" width="90" height="440" viewBox="0 0 90 440"><rect x="26.80000000000001" y="21.600000000000023" width="20.5" height="9" rx="3" fill="none" stroke="#767676" stroke-width="2.6"/><rect x="12.600000000000023" y="27.899999999999977" width="48.4" height="38.4" rx="4" fill="#767676"/><rect x="12.600000000000023" y="47" width="48.4" height="1.3" fill="#f0f0f0"/><rect x="20" y="43" width="6" height="8" rx="1" fill="#eac57e" stroke="#f0f0f0" stroke-width="1"/><rect x="47" y="43" width="6" height="8" rx="1" fill="#eac57e" stroke="#f0f0f0" stroke-width="1"/><path d="M50.59999999999999 51.39999999999998 H57.79999999999999 V59.09999999999999 H65.5 V66.29999999999998 H57.79999999999999 V74 H50.59999999999999 V66.29999999999998 H42.89999999999998 V59.09999999999999 H50.59999999999999Z" fill="#5581bd" stroke="#f0f0f0" stroke-width="2.2" paint-order="stroke"/><rect x="14.199999999999989" y="140.5" width="34" height="48" rx="3.5" fill="#767676"/><rect x="18.600000000000023" y="145.5" width="25" height="8.2" fill="#5581bd" stroke="#f0f0f0" stroke-width="1.2"/><circle cx="23.0" cy="162.5" r="3.1" fill="#f4f4f4"/><circle cx="23.0" cy="171.0" r="3.1" fill="#f4f4f4"/><circle cx="23.0" cy="179.5" r="3.1" fill="#f4f4f4"/><circle cx="31.6" cy="162.5" r="3.1" fill="#f4f4f4"/><circle cx="31.6" cy="171.0" r="3.1" fill="#f4f4f4"/><circle cx="31.6" cy="179.5" r="3.1" fill="#f4f4f4"/><circle cx="40.2" cy="162.5" r="3.1" fill="#f4f4f4"/><circle cx="40.2" cy="171.0" r="3.1" fill="#f4f4f4"/><circle cx="40.2" cy="179.5" r="3.1" fill="#f4f4f4"/><path d="M51.4 170 H58.6 V177.9 H66.5 V185.1 H58.6 V193 H51.4 V185.1 H43.5 V177.9 H51.4Z" fill="#5581bd" stroke="#f0f0f0" stroke-width="2.2" paint-order="stroke"/><path d="M16.75 263.75 H34 L51 281 L36.5 300 L16.75 280.5 Z" fill="none" stroke="#767676" stroke-width="5.5" stroke-linejoin="round"/><circle cx="20.8" cy="268.3" r="3" fill="#fff"/><g transform="translate(35,307.29999999999995) rotate(-42.8)"><path d="M0 0 L7 -4.2 H31 V4.2 H7Z" fill="#5581bd" stroke="#f0f0f0" stroke-width="1.5" paint-order="stroke"/><path d="M2.2 0 L6.5 -2.4 V2.4Z" fill="#fff"/><path d="M10 -0.9 H28 V0.9 H10Z" fill="#fff" opacity="0.75"/><rect x="31" y="-4.2" width="7.5" height="8.4" fill="#e07f90"/></g><path d="M16.75 378.25 H34 L51 395.5 L36.5 414.5 L16.75 395.0 Z" fill="none" stroke="#767676" stroke-width="5.5" stroke-linejoin="round"/><circle cx="20.8" cy="382.8" r="3" fill="#fff"/><path d="M49.3 395.1 H56.7 V402.95000000000005 H64.30000000000001 V410.35 H56.7 V418.20000000000005 H49.3 V410.35 H41.69999999999999 V402.95000000000005 H49.3Z" fill="#5581bd" stroke="#f0f0f0" stroke-width="2.2" paint-order="stroke"/></svg>
<div class="t" style="left:-1.5px;width:800px;text-align:center;top:583.07px;font-size:12.2px;color:#1a1a1a;font-weight:normal;">Auftrag</div>
<div class="t" style="left:-1.5px;width:800px;text-align:center;top:600.07px;font-size:12.2px;color:#1a1a1a;font-weight:normal;">erstellen (F4)</div>
<div class="t" style="left:-1.5px;width:800px;text-align:center;top:702.67px;font-size:12.2px;color:#1a1a1a;font-weight:normal;">Angebot</div>
<div class="t" style="left:-1.5px;width:800px;text-align:center;top:719.67px;font-size:12.2px;color:#1a1a1a;font-weight:normal;">erstellen</div>
<div class="t" style="left:-1.5px;width:800px;text-align:center;top:818.67px;font-size:12.2px;color:#1a1a1a;font-weight:normal;">Artikel</div>
<div class="t" style="left:-1.5px;width:800px;text-align:center;top:835.67px;font-size:12.2px;color:#1a1a1a;font-weight:normal;">bearbeiten</div>
<div class="t" style="left:-1.5px;width:800px;text-align:center;top:928.67px;font-size:12.2px;color:#1a1a1a;font-weight:normal;">Artikel</div>
<div class="t" style="left:-1.5px;width:800px;text-align:center;top:945.67px;font-size:12.2px;color:#1a1a1a;font-weight:normal;">erstellen</div>
<div class="t" style="left:463.2px;top:346.96px;font-size:15.4px;color:#111;font-weight:bold;">Name/Firma</div>
<div class="r" style="left:567.4px;top:338.7px;width:370.6px;height:24.80000000000001px;box-sizing:border-box;background:#fbf9d9;border:1px solid #7a7a7a;border-right-color:#b9b9b9;border-bottom-color:#b9b9b9;"></div>
<div class="t" style="left:572px;top:343.99px;font-size:18.2px;color:#000;font-weight:bold;">Karl Nordmann</div>
<div class="r" style="left:938px;top:340.4px;width:22.600000000000023px;height:22.0px;box-sizing:border-box;background:#e9e9e9;border:1px solid #c9c9c9;"></div>
<svg class="r" style="left:941px;top:343px" width="16" height="16" viewBox="0 0 16 16"><path d="M2.5 2.5 L13.5 13.5 M13.5 2.5 L2.5 13.5" stroke="#e37b88" stroke-width="3.8"/></svg>
<div class="r" style="left:962.9px;top:340.4px;width:20.700000000000045px;height:22.0px;box-sizing:border-box;background:#e9e9e9;border:1px solid #c9c9c9;"></div>
<svg class="r" style="left:967px;top:344px" width="12" height="14" viewBox="0 0 12 14"><path d="M9 2 L3 7 L9 12Z" fill="#111"/></svg>
<div class="r" style="left:986.5px;top:340.4px;width:21.399999999999977px;height:22.0px;box-sizing:border-box;background:#e9e9e9;border:1px solid #c9c9c9;"></div>
<svg class="r" style="left:991px;top:344px" width="12" height="14" viewBox="0 0 12 14"><path d="M3 2 L9 7 L3 12Z" fill="#111"/></svg>
<div class="r" style="left:567.4px;top:363.5px;width:393.20000000000005px;height:24.5px;box-sizing:border-box;background:#fff;border:1px solid #7a7a7a;border-right-color:#b9b9b9;border-bottom-color:#b9b9b9;"></div>
<div class="r" style="left:463px;top:393px;width:1095px;height:1px;background:#a9a9a9;"></div>
<div class="r" style="left:463px;top:394px;width:1095px;height:1px;background:#fff;"></div>
<div class="t" style="left:1035.2px;top:347.49px;font-size:14.9px;color:#111;font-weight:bold;">Kunden-Nr.</div>
<div class="r" style="left:1128.2px;top:338.7px;width:153.79999999999995px;height:25.30000000000001px;box-sizing:border-box;background:#fbf9d9;border:1px solid #7a7a7a;border-right-color:#b9b9b9;border-bottom-color:#b9b9b9;"></div>
<div class="t" style="left:1147px;top:344.16px;font-size:18px;color:#000;font-weight:bold;">1000026</div>
<div class="r" style="left:1283.3px;top:340.4px;width:22.299999999999955px;height:22.0px;box-sizing:border-box;background:#e9e9e9;border:1px solid #c9c9c9;"></div>
<svg class="r" style="left:1286px;top:343px" width="16" height="16" viewBox="0 0 16 16"><path d="M2.5 2.5 L13.5 13.5 M13.5 2.5 L2.5 13.5" stroke="#e37b88" stroke-width="3.8"/></svg>
<div class="t" style="left:1035.2px;top:372.79px;font-size:14.9px;color:#111;font-weight:bold;">Matchcode</div>
<div class="r" style="left:1128.2px;top:364px;width:153.79999999999995px;height:24px;box-sizing:border-box;background:#fbf9d9;border:1px solid #7a7a7a;border-right-color:#b9b9b9;border-bottom-color:#b9b9b9;"></div>
<div class="t" style="left:1133.1px;top:369.64px;font-size:14.6px;color:#1a1a1a;font-weight:normal;">nordmann karl</div>
<div class="r" style="left:1283.3px;top:366px;width:22.299999999999955px;height:21.5px;box-sizing:border-box;background:#e9e9e9;border:1px solid #c9c9c9;"></div>
<svg class="r" style="left:1286px;top:368px" width="16" height="16" viewBox="0 0 16 16"><path d="M2.5 2.5 L13.5 13.5 M13.5 2.5 L2.5 13.5" stroke="#e37b88" stroke-width="3.8"/></svg>
<div class="t" style="left:1347.3px;top:342.59px;font-size:14.9px;color:#111;font-weight:bold;">Ref.-Nr.</div>
<div class="r" style="left:1405.8px;top:338.7px;width:134.70000000000005px;height:25.30000000000001px;box-sizing:border-box;background:#fbf9d9;border:1px solid #7a7a7a;border-right-color:#b9b9b9;border-bottom-color:#b9b9b9;"></div>
<div class="r" style="left:1541.9px;top:340.4px;width:21.699999999999818px;height:22.0px;box-sizing:border-box;background:#e9e9e9;border:1px solid #c9c9c9;"></div>
<svg class="r" style="left:1544px;top:343px" width="16" height="16" viewBox="0 0 16 16"><path d="M2.5 2.5 L13.5 13.5 M13.5 2.5 L2.5 13.5" stroke="#e37b88" stroke-width="3.8"/></svg>
<div class="t" style="left:1347.3px;top:370.49px;font-size:14.9px;color:#111;font-weight:bold;">A/R-Nr.</div>
<div class="r" style="left:1405.8px;top:364px;width:134.70000000000005px;height:24px;box-sizing:border-box;background:#fbf9d9;border:1px solid #7a7a7a;border-right-color:#b9b9b9;border-bottom-color:#b9b9b9;"></div>
<div class="r" style="left:1541.9px;top:366px;width:21.699999999999818px;height:21.5px;box-sizing:border-box;background:#e9e9e9;border:1px solid #c9c9c9;"></div>
<svg class="r" style="left:1544px;top:368px" width="16" height="16" viewBox="0 0 16 16"><path d="M2.5 2.5 L13.5 13.5 M13.5 2.5 L2.5 13.5" stroke="#e37b88" stroke-width="3.8"/></svg>
<div class="t" style="left:463.2px;top:411.14px;font-size:14.6px;color:#1a1a1a;font-weight:normal;">Strasse</div>
<div class="t" style="left:463.2px;top:436.44px;font-size:14.6px;color:#1a1a1a;font-weight:normal;">PLZ, Ort</div>
<div class="t" style="left:463.2px;top:461.74px;font-size:14.6px;color:#1a1a1a;font-weight:normal;">Postfach, PLZ</div>
<div class="t" style="left:463.2px;top:486.64px;font-size:14.6px;color:#1a1a1a;font-weight:normal;">Land</div>
<div class="t" style="left:463.2px;top:531.04px;font-size:14.6px;color:#1a1a1a;font-weight:normal;">Telefon</div>
<div class="t" style="left:463.2px;top:556.34px;font-size:14.6px;color:#1a1a1a;font-weight:normal;">Mobil</div>
<div class="t" style="left:463.2px;top:580.34px;font-size:14.6px;color:#1a1a1a;font-weight:normal;">Fax</div>
<div class="t" style="left:463.2px;top:604.94px;font-size:14.6px;color:#1a1a1a;font-weight:normal;">Email</div>
<div class="t" style="left:463.2px;top:630.24px;font-size:14.6px;color:#1a1a1a;font-weight:normal;">eBay</div>
<div class="r" style="left:567.4px;top:401.8px;width:287.1px;height:24.69999999999999px;box-sizing:border-box;background:#fff;border:1px solid #7a7a7a;border-right-color:#b9b9b9;border-bottom-color:#b9b9b9;"></div>
<div class="t" style="left:571.6px;top:407.64px;font-size:14.6px;color:#1a1a1a;font-weight:normal;">Testgasse 43</div>
<div class="r" style="left:854.9px;top:402.8px;width:23.0px;height:23.0px;box-sizing:border-box;background:#e9e9e9;border:1px solid #c9c9c9;"></div>
<svg class="r" style="left:858px;top:406px" width="16" height="16" viewBox="0 0 16 16"><circle cx="8" cy="8" r="7" fill="#6b97cf"/><path d="M4 4 C6 6 5 9 8 10 C9 12 7 14 8 15 M10 2 C10 4 12 5 14 5" fill="none" stroke="#e8eef6" stroke-width="1.6"/></svg>
<div class="r" style="left:888.7px;top:402.8px;width:32.299999999999955px;height:31.899999999999977px;box-sizing:border-box;background:#e9e9e9;border:1px solid #c9c9c9;"></div>
<svg class="r" style="left:892px;top:407px" width="24" height="22" viewBox="0 0 24 22"><rect x="5" y="1" width="14" height="6" fill="#fff" stroke="#8aa6c8" stroke-width="1.2"/><rect x="1" y="7" width="22" height="9" rx="2" fill="#6b97cf"/><rect x="5" y="13" width="14" height="8" fill="#fff" stroke="#8aa6c8" stroke-width="1.2"/><line x1="7" y1="16" x2="17" y2="16" stroke="#8aa6c8"/><line x1="7" y1="18.5" x2="17" y2="18.5" stroke="#8aa6c8"/></svg>
<div class="r" style="left:888.7px;top:441.6px;width:32.299999999999955px;height:31.799999999999955px;box-sizing:border-box;background:#e9e9e9;border:1px solid #c9c9c9;"></div>
<svg class="r" style="left:894px;top:445px" width="22" height="24" viewBox="0 0 22 24"><path d="M2 1 H12 L17 6 V22 H2Z" fill="#fff" stroke="#9a9a9a" stroke-width="1"/><line x1="5" y1="10" x2="11" y2="10" stroke="#6b97cf" stroke-width="1.2"/><line x1="5" y1="13" x2="11" y2="13" stroke="#6b97cf" stroke-width="1.2"/><line x1="5" y1="16" x2="10" y2="16" stroke="#6b97cf" stroke-width="1.2"/><circle cx="13" cy="14" r="3.5" fill="none" stroke="#6b97cf" stroke-width="1.4"/><line x1="15.5" y1="16.5" x2="19" y2="20" stroke="#6b97cf" stroke-width="1.8"/></svg>
<div class="r" style="left:567.4px;top:426.5px;width:59.60000000000002px;height:25.0px;box-sizing:border-box;background:#fbf9d9;border:1px solid #7a7a7a;border-right-color:#b9b9b9;border-bottom-color:#b9b9b9;"></div>
<div class="t" style="left:571.6px;top:432.64px;font-size:14.6px;color:#1a1a1a;font-weight:normal;">13031</div>
<div class="r" style="left:628.2px;top:427.5px;width:21.59999999999991px;height:23.0px;box-sizing:border-box;background:#e9e9e9;border:1px solid #c9c9c9;"></div>
<svg class="r" style="left:631px;top:431px" width="16" height="16" viewBox="0 0 16 16"><path d="M2.5 2.5 L13.5 13.5 M13.5 2.5 L2.5 13.5" stroke="#e37b88" stroke-width="3.8"/></svg>
<div class="r" style="left:652px;top:426.5px;width:226px;height:25.0px;box-sizing:border-box;background:#fff;border:1px solid #7a7a7a;border-right-color:#b9b9b9;border-bottom-color:#b9b9b9;"></div>
<div class="t" style="left:656px;top:432.64px;font-size:14.6px;color:#1a1a1a;font-weight:normal;">Musterstadt</div>
<div class="r" style="left:567.4px;top:451.5px;width:84.10000000000002px;height:25.19999999999999px;box-sizing:border-box;background:#fff;border:1px solid #7a7a7a;border-right-color:#b9b9b9;border-bottom-color:#b9b9b9;"></div>
<div class="r" style="left:651.5px;top:451.5px;width:226.5px;height:25.19999999999999px;box-sizing:border-box;background:#fff;border:1px solid #7a7a7a;border-right-color:#b9b9b9;border-bottom-color:#b9b9b9;"></div>
<div class="r" style="left:567.4px;top:476.7px;width:310.6px;height:25.30000000000001px;box-sizing:border-box;background:#fff;border:1px solid #7a7a7a;border-right-color:#b9b9b9;border-bottom-color:#b9b9b9;"></div>
<div class="t" style="left:570.5px;top:483.14px;font-size:14.6px;color:#1a1a1a;font-weight:normal;">Deutschland</div>
<svg class="r" style="left:861px;top:484px" width="12" height="10" viewBox="0 0 12 10"><path d="M1.5 3 L6 7.5 L10.5 3" fill="none" stroke="#333" stroke-width="1.2"/></svg>
<div class="r" style="left:567.4px;top:522px;width:310.6px;height:25.399999999999977px;box-sizing:border-box;background:#fff;border:1px solid #7a7a7a;border-right-color:#b9b9b9;border-bottom-color:#b9b9b9;"></div>
<div class="t" style="left:571.6px;top:528.14px;font-size:14.6px;color:#1a1a1a;font-weight:normal;">002112484664</div>
<div class="r" style="left:567.4px;top:547.4px;width:310.6px;height:24.899999999999977px;box-sizing:border-box;background:#fff;border:1px solid #7a7a7a;border-right-color:#b9b9b9;border-bottom-color:#b9b9b9;"></div>
<div class="r" style="left:567.4px;top:572.3px;width:310.6px;height:24.700000000000045px;box-sizing:border-box;background:#fff;border:1px solid #7a7a7a;border-right-color:#b9b9b9;border-bottom-color:#b9b9b9;"></div>
<div class="r" style="left:567.4px;top:597px;width:239.20000000000005px;height:24.799999999999955px;box-sizing:border-box;background:#fbf9d9;border:1px solid #7a7a7a;border-right-color:#b9b9b9;border-bottom-color:#b9b9b9;"></div>
<div class="r" style="left:806.6px;top:598px;width:23.0px;height:23px;box-sizing:border-box;background:#e9e9e9;border:1px solid #c9c9c9;"></div>
<svg class="r" style="left:810px;top:603px" width="16" height="12" viewBox="0 0 16 12"><rect x="0.5" y="0.5" width="15" height="11" fill="#6b97cf"/><path d="M0.5 0.5 L8 7 L15.5 0.5" fill="none" stroke="#fff" stroke-width="1.3"/></svg>
<div class="r" style="left:831px;top:598px;width:23px;height:23px;box-sizing:border-box;background:#e9e9e9;border:1px solid #c9c9c9;"></div>
<svg class="r" style="left:834px;top:601px" width="16" height="16" viewBox="0 0 16 16"><circle cx="8" cy="8" r="7" fill="#6b97cf"/><path d="M4 4 C6 6 5 9 8 10 C9 12 7 14 8 15 M10 2 C10 4 12 5 14 5" fill="none" stroke="#e8eef6" stroke-width="1.6"/></svg>
<div class="r" style="left:854.9px;top:598px;width:23.0px;height:23px;box-sizing:border-box;background:#e9e9e9;border:1px solid #c9c9c9;"></div>
<svg class="r" style="left:858px;top:601px" width="16" height="16" viewBox="0 0 16 16"><path d="M2.5 2.5 L13.5 13.5 M13.5 2.5 L2.5 13.5" stroke="#e37b88" stroke-width="3.8"/></svg>
<div class="r" style="left:567.4px;top:621.8px;width:287.1px;height:24.700000000000045px;box-sizing:border-box;background:#fbf9d9;border:1px solid #7a7a7a;border-right-color:#b9b9b9;border-bottom-color:#b9b9b9;"></div>
<div class="r" style="left:854.9px;top:623px;width:23.0px;height:23px;box-sizing:border-box;background:#e9e9e9;border:1px solid #c9c9c9;"></div>
<svg class="r" style="left:858px;top:626px" width="16" height="16" viewBox="0 0 16 16"><path d="M2.5 2.5 L13.5 13.5 M13.5 2.5 L2.5 13.5" stroke="#e37b88" stroke-width="3.8"/></svg>
<div class="t" style="left:950.4px;top:405.94px;font-size:14.6px;color:#1a1a1a;font-weight:normal;">Schufa</div>
<div class="r" style="left:1063.1px;top:401.8px;width:127.5px;height:24.69999999999999px;box-sizing:border-box;background:#fff;border:1px solid #7a7a7a;border-right-color:#b9b9b9;border-bottom-color:#b9b9b9;"></div>
<div class="r" style="left:1207px;top:406.5px;width:14.5px;height:14.5px;box-sizing:border-box;background:#fff;border:1px solid #333;"></div>
<div class="t" style="left:1226.4px;top:407.14px;font-size:14.6px;color:#1a1a1a;font-weight:normal;">Lastschrift</div>
<div class="r" style="left:950.7px;top:432px;width:14.5px;height:14.5px;box-sizing:border-box;background:#fff;border:1px solid #333;"></div>
<div class="t" style="left:970.1px;top:432.14px;font-size:14.6px;color:#1a1a1a;font-weight:normal;">Mahnverfahren</div>
<div class="r" style="left:1087px;top:432px;width:14.5px;height:14.5px;box-sizing:border-box;background:#fff;border:1px solid #333;"></div>
<div class="t" style="left:1106.5px;top:432.14px;font-size:14.6px;color:#1a1a1a;font-weight:normal;">Vorkasse</div>
<div class="r" style="left:1207px;top:427.5px;width:23px;height:23.899999999999977px;box-sizing:border-box;background:#fff;border:1px solid #a9a9a9;"></div>
<div class="t" style="left:819px;width:800px;text-align:center;top:431.64px;font-size:14.6px;color:#1a1a1a;font-weight:normal;">0</div>
<div class="t" style="left:1230.7px;top:435.44px;font-size:14.6px;color:#1a1a1a;font-weight:normal;">Mahnstufe</div>
<div class="t" style="left:950.4px;top:480.84px;font-size:14.6px;color:#1a1a1a;font-weight:normal;">Umsatz/Jahr</div>
<div class="r" style="left:1063.1px;top:472.8px;width:95.30000000000018px;height:24.30000000000001px;box-sizing:border-box;background:#fff;border:1px solid #7a7a7a;border-right-color:#b9b9b9;border-bottom-color:#b9b9b9;"></div>
<div class="t" style="left:354.5px;width:800px;text-align:right;top:478.44px;font-size:14.6px;color:#1a1a1a;font-weight:normal;">0,00</div>
<div class="t" style="left:950.4px;top:506.14px;font-size:14.6px;color:#1a1a1a;font-weight:normal;">Umsatz gesamt</div>
<div class="r" style="left:1063.1px;top:497.1px;width:95.30000000000018px;height:25.100000000000023px;box-sizing:border-box;background:#fff;border:1px solid #7a7a7a;border-right-color:#b9b9b9;border-bottom-color:#b9b9b9;"></div>
<div class="t" style="left:354.5px;width:800px;text-align:right;top:502.74px;font-size:14.6px;color:#1a1a1a;font-weight:normal;">0,00</div>
<div class="t" style="left:950.4px;top:531.14px;font-size:14.6px;color:#1a1a1a;font-weight:normal;">Umsatz offen</div>
<div class="r" style="left:1063.1px;top:522.2px;width:95.30000000000018px;height:25.199999999999932px;box-sizing:border-box;background:#fff;border:1px solid #7a7a7a;border-right-color:#b9b9b9;border-bottom-color:#b9b9b9;"></div>
<div class="t" style="left:354.5px;width:800px;text-align:right;top:527.84px;font-size:14.6px;color:#1a1a1a;font-weight:normal;">0,00</div>
<div class="t" style="left:1200.1px;top:479.14px;font-size:14.6px;color:#1a1a1a;font-weight:normal;">Erstellt / Umsatz</div>
<div class="r" style="left:1200.1px;top:495.8px;width:112.70000000000005px;height:23.69999999999999px;box-sizing:border-box;background:#fff;border:1px solid #7a7a7a;border-right-color:#b9b9b9;border-bottom-color:#b9b9b9;"></div>
<div class="t" style="left:1205px;top:501.64px;font-size:14.6px;color:#1a1a1a;font-weight:normal;">12.10.2020</div>
<div class="r" style="left:1200.1px;top:522.1px;width:112.70000000000005px;height:24.600000000000023px;box-sizing:border-box;background:#fff;border:1px solid #7a7a7a;border-right-color:#b9b9b9;border-bottom-color:#b9b9b9;"></div>
<div class="t" style="left:1215px;top:529.00px;font-size:13px;color:#555;font-weight:normal;">.&nbsp;&nbsp;&nbsp;.</div>
<div class="r" style="left:1358.5px;top:405px;width:1.0px;height:151px;background:#a0a0a0;"></div>
<div class="t" style="left:1400.6px;top:407.84px;font-size:14.6px;color:#1a1a1a;font-weight:normal;">Grundrabatt</div>
<div class="r" style="left:1498.5px;top:401.8px;width:65.09999999999991px;height:25.100000000000023px;box-sizing:border-box;background:#fff;border:1px solid #7a7a7a;border-right-color:#b9b9b9;border-bottom-color:#b9b9b9;"></div>
<div class="t" style="left:759px;width:800px;text-align:right;top:407.74px;font-size:14.6px;color:#1a1a1a;font-weight:normal;">0,0%</div>
<div class="t" style="left:1400.6px;top:433.14px;font-size:14.6px;color:#1a1a1a;font-weight:normal;">Rabatt (1)</div>
<div class="r" style="left:1498.5px;top:426.90000000000003px;width:65.09999999999991px;height:25.100000000000023px;box-sizing:border-box;background:#fff;border:1px solid #7a7a7a;border-right-color:#b9b9b9;border-bottom-color:#b9b9b9;"></div>
<div class="t" style="left:759px;width:800px;text-align:right;top:432.84px;font-size:14.6px;color:#1a1a1a;font-weight:normal;">0,0%</div>
<div class="t" style="left:1400.6px;top:458.44px;font-size:14.6px;color:#1a1a1a;font-weight:normal;">Rabatt (2)</div>
<div class="r" style="left:1498.5px;top:452.0px;width:65.09999999999991px;height:25.100000000000023px;box-sizing:border-box;background:#fff;border:1px solid #7a7a7a;border-right-color:#b9b9b9;border-bottom-color:#b9b9b9;"></div>
<div class="t" style="left:759px;width:800px;text-align:right;top:457.94px;font-size:14.6px;color:#1a1a1a;font-weight:normal;">0,0%</div>
<div class="t" style="left:1400.6px;top:483.44px;font-size:14.6px;color:#1a1a1a;font-weight:normal;">Rabatt (3)</div>
<div class="r" style="left:1498.5px;top:477.1px;width:65.09999999999991px;height:25.100000000000023px;box-sizing:border-box;background:#fff;border:1px solid #7a7a7a;border-right-color:#b9b9b9;border-bottom-color:#b9b9b9;"></div>
<div class="t" style="left:759px;width:800px;text-align:right;top:483.04px;font-size:14.6px;color:#1a1a1a;font-weight:normal;">0,0%</div>
<div class="t" style="left:1400.6px;top:508.74px;font-size:14.6px;color:#1a1a1a;font-weight:normal;">Rabatt (4)</div>
<div class="r" style="left:1498.5px;top:502.20000000000005px;width:65.09999999999991px;height:25.100000000000023px;box-sizing:border-box;background:#fff;border:1px solid #7a7a7a;border-right-color:#b9b9b9;border-bottom-color:#b9b9b9;"></div>
<div class="t" style="left:759px;width:800px;text-align:right;top:508.14px;font-size:14.6px;color:#1a1a1a;font-weight:normal;">0,0%</div>
<div class="t" style="left:1400.6px;top:532.74px;font-size:14.6px;color:#1a1a1a;font-weight:normal;">Zensur</div>
<div class="r" style="left:1498.5px;top:527.3px;width:65.09999999999991px;height:25.100000000000023px;box-sizing:border-box;background:#fff;border:1px solid #7a7a7a;border-right-color:#b9b9b9;border-bottom-color:#b9b9b9;"></div>
<div class="t" style="left:759px;width:800px;text-align:right;top:533.24px;font-size:14.6px;color:#1a1a1a;font-weight:normal;">4</div>
<div class="t" style="left:950.4px;top:573.54px;font-size:14.6px;color:#1a1a1a;font-weight:normal;">Ansprechpartner</div>
<div class="r" style="left:1063.1px;top:565.5px;width:231.70000000000005px;height:24.0px;box-sizing:border-box;background:#fff;border:1px solid #7a7a7a;border-right-color:#b9b9b9;border-bottom-color:#b9b9b9;"></div>
<div class="t" style="left:950.4px;top:600.74px;font-size:14.6px;color:#1a1a1a;font-weight:normal;">Vertreter</div>
<div class="r" style="left:1063.1px;top:593.4px;width:231.70000000000005px;height:25.600000000000023px;box-sizing:border-box;background:#e5e5e5;border:1px solid #b4b4b4;"></div>
<div class="t" style="left:1067px;top:599.64px;font-size:14.6px;color:#1a1a1a;font-weight:normal;">Kundenservice</div>
<svg class="r" style="left:1277px;top:601px" width="12" height="10" viewBox="0 0 12 10"><path d="M1.5 3 L6 7.5 L10.5 3" fill="none" stroke="#333" stroke-width="1.2"/></svg>
<div class="t" style="left:950.4px;top:630.34px;font-size:14.6px;color:#1a1a1a;font-weight:normal;">Bemerkungen</div>
<div class="r" style="left:1063.1px;top:622.3px;width:375.3000000000002px;height:24.300000000000068px;box-sizing:border-box;background:#fff;border:1px solid #7a7a7a;border-right-color:#b9b9b9;border-bottom-color:#b9b9b9;"></div>
<div class="t" style="left:463px;top:717.04px;font-size:14.6px;color:#1a1a1a;font-weight:normal;">Artikel-Nr.</div>
<div class="r" style="left:567px;top:708.6px;width:288px;height:24.100000000000023px;box-sizing:border-box;background:#fbf9d9;border:1px solid #7a7a7a;border-right-color:#b9b9b9;border-bottom-color:#b9b9b9;"></div>
<div class="t" style="left:571.7px;top:712.16px;font-size:18px;color:#000;font-weight:bold;">BM-Dachfolie</div>
<div class="r" style="left:856.8px;top:710px;width:21.600000000000023px;height:21.600000000000023px;box-sizing:border-box;background:#e9e9e9;border:1px solid #c9c9c9;"></div>
<svg class="r" style="left:859px;top:712px" width="16" height="16" viewBox="0 0 16 16"><path d="M2.5 2.5 L13.5 13.5 M13.5 2.5 L2.5 13.5" stroke="#e37b88" stroke-width="3.8"/></svg>
<div class="r" style="left:880.6px;top:710px;width:20.799999999999955px;height:21.600000000000023px;box-sizing:border-box;background:#e9e9e9;border:1px solid #c9c9c9;"></div>
<svg class="r" style="left:885px;top:713px" width="12" height="14" viewBox="0 0 12 14"><path d="M9 2 L3 7 L9 12Z" fill="#111"/></svg>
<div class="r" style="left:904.2px;top:710px;width:21.399999999999977px;height:21.600000000000023px;box-sizing:border-box;background:#e9e9e9;border:1px solid #c9c9c9;"></div>
<svg class="r" style="left:908px;top:713px" width="12" height="14" viewBox="0 0 12 14"><path d="M3 2 L9 7 L3 12Z" fill="#111"/></svg>
<div class="t" style="left:463px;top:754.44px;font-size:14.6px;color:#1a1a1a;font-weight:normal;">Beschreibung</div>
<div class="r" style="left:567px;top:746px;width:311.4px;height:24.5px;box-sizing:border-box;background:#fff;border:1px solid #7a7a7a;border-right-color:#b9b9b9;border-bottom-color:#b9b9b9;"></div>
<div class="r" style="left:567px;top:770.5px;width:311.4px;height:24.899999999999977px;box-sizing:border-box;background:#fff;border:1px solid #7a7a7a;border-right-color:#b9b9b9;border-bottom-color:#b9b9b9;"></div>
<div class="r" style="left:567px;top:795.4px;width:311.4px;height:25.0px;box-sizing:border-box;background:#fff;border:1px solid #7a7a7a;border-right-color:#b9b9b9;border-bottom-color:#b9b9b9;"></div>
<div class="r" style="left:567px;top:820.4px;width:311.4px;height:25.0px;box-sizing:border-box;background:#fff;border:1px solid #7a7a7a;border-right-color:#b9b9b9;border-bottom-color:#b9b9b9;"></div>
<div class="r" style="left:567px;top:845.4px;width:311.4px;height:25.0px;box-sizing:border-box;background:#fff;border:1px solid #7a7a7a;border-right-color:#b9b9b9;border-bottom-color:#b9b9b9;"></div>
<div class="t" style="left:571.7px;top:751.74px;font-size:14.6px;color:#1a1a1a;font-weight:normal;">Farbe: rot</div>
<div class="t" style="left:571.7px;top:776.64px;font-size:14.6px;color:#1a1a1a;font-weight:normal;">30cm, 5 lfm</div>
<div class="t" style="left:463px;top:852.44px;font-size:14.6px;color:#1a1a1a;font-weight:normal;">Bemerkung</div>
<div class="r" style="left:889.5px;top:746px;width:31.100000000000023px;height:31.100000000000023px;box-sizing:border-box;background:#e9e9e9;border:1px solid #c9c9c9;"></div>
<svg class="r" style="left:893px;top:751px" width="24" height="22" viewBox="0 0 24 22"><rect x="5" y="1" width="14" height="6" fill="#fff" stroke="#8aa6c8" stroke-width="1.2"/><rect x="1" y="7" width="22" height="9" rx="2" fill="#6b97cf"/><rect x="5" y="13" width="14" height="8" fill="#fff" stroke="#8aa6c8" stroke-width="1.2"/><line x1="7" y1="16" x2="17" y2="16" stroke="#8aa6c8"/><line x1="7" y1="18.5" x2="17" y2="18.5" stroke="#8aa6c8"/></svg>
<div class="r" style="left:889.5px;top:784.9px;width:31.100000000000023px;height:31.100000000000023px;box-sizing:border-box;background:#e9e9e9;border:1px solid #c9c9c9;"></div>
<svg class="r" style="left:895px;top:788px" width="22" height="24" viewBox="0 0 22 24"><path d="M2 1 H12 L17 6 V22 H2Z" fill="#fff" stroke="#9a9a9a" stroke-width="1"/><line x1="5" y1="10" x2="11" y2="10" stroke="#6b97cf" stroke-width="1.2"/><line x1="5" y1="13" x2="11" y2="13" stroke="#6b97cf" stroke-width="1.2"/><line x1="5" y1="16" x2="10" y2="16" stroke="#6b97cf" stroke-width="1.2"/><circle cx="13" cy="14" r="3.5" fill="none" stroke="#6b97cf" stroke-width="1.4"/><line x1="15.5" y1="16.5" x2="19" y2="20" stroke="#6b97cf" stroke-width="1.8"/></svg>
<div class="t" style="left:463px;top:898.24px;font-size:14.6px;color:#1a1a1a;font-weight:normal;">EK netto</div>
<div class="r" style="left:567px;top:889.8px;width:87.39999999999998px;height:23.600000000000023px;box-sizing:border-box;background:#fff;border:1px solid #7a7a7a;border-right-color:#b9b9b9;border-bottom-color:#b9b9b9;"></div>
<div class="t" style="left:-149.70000000000005px;width:800px;text-align:right;top:895.44px;font-size:14.6px;color:#1a1a1a;font-weight:normal;">5,32</div>
<div class="t" style="left:678px;top:898.24px;font-size:14.6px;color:#1a1a1a;font-weight:normal;">Rab.</div>
<div class="r" style="left:718px;top:889.8px;width:63.299999999999955px;height:23.600000000000023px;box-sizing:border-box;background:#fff;border:1px solid #7a7a7a;border-right-color:#b9b9b9;border-bottom-color:#b9b9b9;"></div>
<div class="t" style="left:-23.5px;width:800px;text-align:right;top:895.44px;font-size:14.6px;color:#1a1a1a;font-weight:normal;">0,00 %</div>
<div class="t" style="left:799.3px;top:898.24px;font-size:14.6px;color:#1a1a1a;font-weight:normal;">TZ</div>
<div class="r" style="left:847.3px;top:889.8px;width:86.60000000000002px;height:23.600000000000023px;box-sizing:border-box;background:#fff;border:1px solid #7a7a7a;border-right-color:#b9b9b9;border-bottom-color:#b9b9b9;"></div>
<div class="t" style="left:129.5px;width:800px;text-align:right;top:895.44px;font-size:14.6px;color:#1a1a1a;font-weight:normal;">0,00 %</div>
<div class="t" style="left:463px;top:923.24px;font-size:14.6px;color:#1a1a1a;font-weight:normal;">VK netto</div>
<div class="r" style="left:567px;top:913.4px;width:87.39999999999998px;height:25.5px;box-sizing:border-box;background:#fff;border:1px solid #7a7a7a;border-right-color:#b9b9b9;border-bottom-color:#b9b9b9;"></div>
<div class="t" style="left:-149.70000000000005px;width:800px;text-align:right;top:919.04px;font-size:14.6px;color:#1a1a1a;font-weight:normal;">0,00</div>
<div class="t" style="left:678px;top:923.24px;font-size:14.6px;color:#1a1a1a;font-weight:normal;">Rab.</div>
<div class="r" style="left:718px;top:913.4px;width:63.299999999999955px;height:25.5px;box-sizing:border-box;background:#fff;border:1px solid #7a7a7a;border-right-color:#b9b9b9;border-bottom-color:#b9b9b9;"></div>
<div class="t" style="left:-23.5px;width:800px;text-align:right;top:919.04px;font-size:14.6px;color:#1a1a1a;font-weight:normal;">0,00 %</div>
<div class="t" style="left:799.3px;top:923.24px;font-size:14.6px;color:#1a1a1a;font-weight:normal;">Netto</div>
<div class="r" style="left:847.3px;top:913.4px;width:86.60000000000002px;height:25.5px;box-sizing:border-box;background:#fff;border:1px solid #7a7a7a;border-right-color:#b9b9b9;border-bottom-color:#b9b9b9;"></div>
<div class="t" style="left:129.5px;width:800px;text-align:right;top:919.04px;font-size:14.6px;color:#1a1a1a;font-weight:normal;">0,00</div>
<div class="t" style="left:463px;top:948.24px;font-size:14.6px;color:#1a1a1a;font-weight:normal;">VK brutto</div>
<div class="r" style="left:567px;top:938.9px;width:87.39999999999998px;height:25.100000000000023px;box-sizing:border-box;background:#fff;border:1px solid #7a7a7a;border-right-color:#b9b9b9;border-bottom-color:#b9b9b9;"></div>
<div class="t" style="left:-149.70000000000005px;width:800px;text-align:right;top:944.54px;font-size:14.6px;color:#1a1a1a;font-weight:normal;">13,20</div>
<div class="t" style="left:678px;top:948.24px;font-size:14.6px;color:#1a1a1a;font-weight:normal;">Rab.</div>
<div class="r" style="left:718px;top:938.9px;width:63.299999999999955px;height:25.100000000000023px;box-sizing:border-box;background:#fff;border:1px solid #7a7a7a;border-right-color:#b9b9b9;border-bottom-color:#b9b9b9;"></div>
<div class="t" style="left:-23.5px;width:800px;text-align:right;top:944.54px;font-size:14.6px;color:#1a1a1a;font-weight:normal;">0,00 %</div>
<div class="t" style="left:799.3px;top:948.24px;font-size:14.6px;color:#1a1a1a;font-weight:normal;">Netto</div>
<div class="r" style="left:847.3px;top:938.9px;width:86.60000000000002px;height:25.100000000000023px;box-sizing:border-box;background:#fff;border:1px solid #7a7a7a;border-right-color:#b9b9b9;border-bottom-color:#b9b9b9;"></div>
<div class="t" style="left:129.5px;width:800px;text-align:right;top:944.54px;font-size:14.6px;color:#1a1a1a;font-weight:normal;">13,20</div>
<div class="t" style="left:950.4px;top:716.64px;font-size:14.6px;color:#1a1a1a;font-weight:normal;">Menge</div>
<div class="r" style="left:1025.4px;top:705px;width:55.59999999999991px;height:26.399999999999977px;box-sizing:border-box;background:#fbf9d9;border:1px solid #7a7a7a;border-right-color:#b9b9b9;border-bottom-color:#b9b9b9;"></div>
<div class="t" style="left:277px;width:800px;text-align:right;top:712.30px;font-size:15px;color:#000;font-weight:bold;">1</div>
<div class="r" style="left:1081px;top:705px;width:23px;height:13px;box-sizing:border-box;background:#f0f0f0;border:1px solid #c0c0c0;"></div>
<div class="r" style="left:1081px;top:718px;width:23px;height:13.399999999999977px;box-sizing:border-box;background:#f0f0f0;border:1px solid #c0c0c0;"></div>
<svg class="r" style="left:1087px;top:707px" width="12" height="9" viewBox="0 0 12 9"><path d="M2 7 L6 3 L10 7Z" fill="#222"/></svg>
<svg class="r" style="left:1087px;top:720px" width="12" height="9" viewBox="0 0 12 9"><path d="M2 2 L6 6 L10 2Z" fill="#222"/></svg>
<div class="r" style="left:1110px;top:705.6px;width:31.5px;height:31.799999999999955px;box-sizing:border-box;background:#e9e9e9;border:1px solid #c9c9c9;"></div>
<svg class="r" style="left:1113px;top:709px" width="26" height="24" viewBox="0 0 26 24"><rect x="7" y="2" width="12" height="7" fill="#e8a35a"/><path d="M1 10 H25 L22 22 H4Z" fill="none" stroke="#888" stroke-width="2"/><path d="M8 10 V22 M13 10 V22 M18 10 V22 M2.5 15 H23.5" stroke="#888" stroke-width="1.5"/><rect x="1" y="9" width="24" height="2.5" fill="#6b97cf"/></svg>
<div class="t" style="left:950.4px;top:742.14px;font-size:14.6px;color:#1a1a1a;font-weight:normal;">Ab Lager</div>
<div class="r" style="left:1025.4px;top:734.4px;width:81.0px;height:27.0px;box-sizing:border-box;background:#e9301f;border:2px solid #c8c8c8;border-top-color:#888;border-left-color:#888;"></div>
<div class="t" style="left:301px;width:800px;text-align:right;top:739.80px;font-size:15px;color:#fff;font-weight:bold;">0,00</div>
<div class="r" style="left:1163px;top:704.5px;width:89px;height:24.0px;background:#ececec;"></div>
<div class="t" style="left:1163.4px;top:713.04px;font-size:14.6px;color:#1a1a1a;font-weight:normal;">Einzelpreis</div>
<div class="r" style="left:1252.4px;top:704.4px;width:95.39999999999986px;height:24.600000000000023px;box-sizing:border-box;background:#fff;border:1px solid #7a7a7a;border-right-color:#b9b9b9;border-bottom-color:#b9b9b9;"></div>
<div class="t" style="left:543px;width:800px;text-align:right;top:710.30px;font-size:15px;color:#000;font-weight:bold;">13,20</div>
<div class="t" style="left:1163.4px;top:742.14px;font-size:14.6px;color:#1a1a1a;font-weight:normal;">Summe</div>
<div class="r" style="left:1252.4px;top:733.5px;width:95.39999999999986px;height:24.0px;box-sizing:border-box;background:#fff;border:1px solid #7a7a7a;border-right-color:#b9b9b9;border-bottom-color:#b9b9b9;"></div>
<div class="t" style="left:543px;width:800px;text-align:right;top:738.76px;font-size:18px;color:#000;font-weight:bold;">13,20</div>
<div class="t" style="left:1356.5px;top:735.09px;font-size:12.3px;color:#1a1af0;font-weight:normal;"><u>mit Mwst.</u></div>
<div class="r" style="left:935.4px;top:773px;width:471.6px;height:1px;background:#9a9a9a;"></div>
<div class="r" style="left:935.4px;top:774px;width:471.6px;height:1px;background:#fff;"></div>
<div class="t" style="left:950.4px;top:796.14px;font-size:14.6px;color:#1a1a1a;font-weight:normal;">Umsatz</div>
<div class="r" style="left:1023.6px;top:789px;width:86.39999999999998px;height:23.399999999999977px;box-sizing:border-box;background:#ececec;border:1px solid #d2d2d2;"></div>
<div class="t" style="left:305px;width:800px;text-align:right;top:793.64px;font-size:14.6px;color:#8a8a8a;font-weight:normal;">0</div>
<div class="t" style="left:950.4px;top:824.04px;font-size:14.6px;color:#1a1a1a;font-weight:normal;">Lager</div>
<div class="r" style="left:1023.6px;top:816px;width:86.39999999999998px;height:23.399999999999977px;box-sizing:border-box;background:#fff;border:1px solid #7a7a7a;border-right-color:#b9b9b9;border-bottom-color:#b9b9b9;"></div>
<div class="t" style="left:305px;width:800px;text-align:right;top:821.14px;font-size:14.6px;color:#1a1a1a;font-weight:normal;">0,00</div>
<div class="t" style="left:950.4px;top:851.64px;font-size:14.6px;color:#1a1a1a;font-weight:normal;">Bestellt</div>
<div class="r" style="left:1023.6px;top:843.9px;width:86.39999999999998px;height:23.100000000000023px;box-sizing:border-box;background:#fff;border:1px solid #7a7a7a;border-right-color:#b9b9b9;border-bottom-color:#b9b9b9;"></div>
<div class="t" style="left:305px;width:800px;text-align:right;top:848.64px;font-size:14.6px;color:#1a1a1a;font-weight:normal;">0</div>
<div class="t" style="left:1156.5px;top:796.14px;font-size:14.6px;color:#8f8f8f;font-weight:normal;">Stückliste</div>
<div class="r" style="left:1256.3px;top:796.5px;width:14.100000000000136px;height:14.0px;box-sizing:border-box;background:#fff;border:1px solid #d0d0d0;"></div>
<div class="t" style="left:1156.5px;top:824.04px;font-size:14.6px;color:#1a1a1a;font-weight:normal;">Reserviert</div>
<div class="r" style="left:1252.4px;top:816px;width:87.0px;height:23.399999999999977px;box-sizing:border-box;background:#fff;border:1px solid #7a7a7a;border-right-color:#b9b9b9;border-bottom-color:#b9b9b9;"></div>
<div class="t" style="left:535px;width:800px;text-align:right;top:821.14px;font-size:14.6px;color:#1a1a1a;font-weight:normal;">0,00</div>
<div class="t" style="left:1156.5px;top:851.64px;font-size:14.6px;color:#1a1a1a;font-weight:normal;">Verfügbar</div>
<div class="r" style="left:1252.4px;top:843.9px;width:87.0px;height:23.100000000000023px;box-sizing:border-box;background:#fff;border:1px solid #7a7a7a;border-right-color:#b9b9b9;border-bottom-color:#b9b9b9;"></div>
<div class="t" style="left:535px;width:800px;text-align:right;top:848.64px;font-size:14.6px;color:#1a1a1a;font-weight:normal;">0,00</div>
<div class="r" style="left:935.4px;top:878px;width:471.6px;height:1px;background:#9a9a9a;"></div>
<div class="r" style="left:935.4px;top:879px;width:471.6px;height:1px;background:#fff;"></div>
<div class="t" style="left:950.4px;top:898.04px;font-size:14.6px;color:#1a1a1a;font-weight:normal;">EK-Preis</div>
<div class="r" style="left:1023.6px;top:890.4px;width:86.39999999999998px;height:23.899999999999977px;box-sizing:border-box;background:#fff;border:1px solid #7a7a7a;border-right-color:#b9b9b9;border-bottom-color:#b9b9b9;"></div>
<div class="t" style="left:305px;width:800px;text-align:right;top:895.64px;font-size:14.6px;color:#1a1a1a;font-weight:normal;">5,32</div>
<div class="t" style="left:950.4px;top:922.94px;font-size:14.6px;color:#1a1a1a;font-weight:normal;">Spanne</div>
<div class="r" style="left:1023.6px;top:914.3px;width:86.39999999999998px;height:24.0px;box-sizing:border-box;background:#ee8585;border:1px solid #7a7a7a;border-right-color:#b9b9b9;border-bottom-color:#b9b9b9;"></div>
<div class="t" style="left:305px;width:800px;text-align:right;top:921.15px;font-size:14px;color:#fff;font-weight:normal;">***,** %</div>
<div class="t" style="left:950.4px;top:948.44px;font-size:14.6px;color:#1a1a1a;font-weight:normal;">Spanne</div>
<div class="r" style="left:1023.6px;top:938.3px;width:86.39999999999998px;height:26.100000000000023px;box-sizing:border-box;background:#fff;border:1px solid #7a7a7a;border-right-color:#b9b9b9;border-bottom-color:#b9b9b9;"></div>
<div class="t" style="left:305px;width:800px;text-align:right;top:944.64px;font-size:14.6px;color:#1a1a1a;font-weight:normal;">108,50 %</div>
<div class="t" style="left:1156.5px;top:898.04px;font-size:14.6px;color:#1a1a1a;font-weight:normal;">EK-Summe</div>
<div class="r" style="left:1252.4px;top:890.4px;width:87.0px;height:23.899999999999977px;box-sizing:border-box;background:#fff;border:1px solid #7a7a7a;border-right-color:#b9b9b9;border-bottom-color:#b9b9b9;"></div>
<div class="t" style="left:535px;width:800px;text-align:right;top:895.70px;font-size:15px;color:#000;font-weight:bold;">5,32</div>
<div class="t" style="left:1348.4px;top:896.32px;font-size:12.5px;color:#1a1a1a;font-weight:normal;">ohne Mwst.</div>
<div class="t" style="left:1156.5px;top:922.94px;font-size:14.6px;color:#1a1a1a;font-weight:normal;">VK-Summe</div>
<div class="r" style="left:1252.4px;top:914.3px;width:87.0px;height:24.0px;box-sizing:border-box;background:#fff;border:1px solid #7a7a7a;border-right-color:#b9b9b9;border-bottom-color:#b9b9b9;"></div>
<div class="t" style="left:535px;width:800px;text-align:right;top:919.60px;font-size:15px;color:#000;font-weight:bold;">0,00</div>
<div class="t" style="left:1348.4px;top:921.22px;font-size:12.5px;color:#1a1a1a;font-weight:normal;">ohne Mwst.</div>
<div class="t" style="left:1156.5px;top:948.44px;font-size:14.6px;color:#1a1a1a;font-weight:normal;">VK-Summe</div>
<div class="r" style="left:1252.4px;top:938.3px;width:87.0px;height:26.100000000000023px;box-sizing:border-box;background:#fff;border:1px solid #7a7a7a;border-right-color:#b9b9b9;border-bottom-color:#b9b9b9;"></div>
<div class="t" style="left:535px;width:800px;text-align:right;top:943.60px;font-size:15px;color:#000;font-weight:bold;">13,20</div>
<div class="t" style="left:1348.4px;top:946.72px;font-size:12.5px;color:#1a1a1a;font-weight:normal;">mit Mwst.</div>
<div class="r" style="left:1428.5px;top:705.6px;width:134.5px;height:33.89999999999998px;box-sizing:border-box;background:#e1e1e1;border:1px solid #adadad;"></div>
<div class="t" style="left:1108px;width:800px;text-align:center;top:715.69px;font-size:14.6px;color:#1a1a1a;font-weight:normal;">Kalkulation</div>
<svg class="r" style="left:1430px;top:708px" width="28" height="28" viewBox="0 0 28 28"><path d="M14 14 L14 2 A12 12 0 0 1 26 14Z" fill="#eac57e"/><path d="M14 14 L26 14 A12 12 0 0 1 14 26Z" fill="#767676"/><path d="M14 14 L14 26 A12 12 0 0 1 14 2Z" fill="#5581bd"/></svg>
<div class="r" style="left:1428.5px;top:750.6px;width:134.5px;height:33.0px;box-sizing:border-box;background:#e1e1e1;border:1px solid #adadad;"></div>
<div class="t" style="left:1095.7px;width:800px;text-align:center;top:760.24px;font-size:14.6px;color:#1a1a1a;font-weight:normal;">Reservierungen</div>
<div class="r" style="left:1428.5px;top:796.5px;width:134.5px;height:33.0px;box-sizing:border-box;background:#e1e1e1;border:1px solid #adadad;"></div>
<div class="t" style="left:1108px;width:800px;text-align:center;top:806.14px;font-size:14.6px;color:#1a1a1a;font-weight:normal;">Lagerbuchung</div>
<svg class="r" style="left:1431px;top:798px" width="28" height="30" viewBox="0 0 28 30"><path d="M3 14 L13 10 L24 14 V25 L13 29 L3 25Z" fill="#fff" stroke="#767676" stroke-width="2"/><path d="M3 14 L13 18 L24 14 M13 18 V29" fill="none" stroke="#767676" stroke-width="2"/><path d="M11 1 L17 7 H13 V12 H9 V7 H5Z" fill="#5581bd"/></svg>
<div class="r" style="left:1428.5px;top:840.6px;width:134.5px;height:33.299999999999955px;box-sizing:border-box;background:#e1e1e1;border:1px solid #adadad;"></div>
<div class="t" style="left:1108px;width:800px;text-align:center;top:850.39px;font-size:14.6px;color:#1a1a1a;font-weight:normal;">Wareneingang</div>
<svg class="r" style="left:1431px;top:842px" width="28" height="30" viewBox="0 0 28 30"><path d="M3 14 L13 10 L24 14 V25 L13 29 L3 25Z" fill="#fff" stroke="#767676" stroke-width="2"/><path d="M3 14 L13 18 L24 14 M13 18 V29" fill="none" stroke="#767676" stroke-width="2"/><path d="M9 1 H13 V6 H17 L11 12 L5 6 H9Z" fill="#5581bd"/></svg>
<div class="r" style="left:1643px;top:741px;width:510px;height:352px;box-shadow:-3px 5px 16px 2px rgba(0,0,0,0.20);"></div>
<div class="r" style="left:1643px;top:741px;width:510px;height:352px;box-sizing:border-box;background:#fff;border:1px solid #6d6d6d;"></div>
<svg class="r" style="left:1654px;top:750px" width="17" height="16" viewBox="0 0 17 16"><rect x="0" y="6" width="7" height="9" fill="#c84a3c"/><rect x="6" y="0" width="10" height="9" fill="#f2c04d"/><rect x="6" y="9" width="10" height="6" fill="#3d6fb7"/><rect x="0.5" y="6.5" width="15" height="9" fill="none" stroke="#777" stroke-width="0.8"/></svg>
<div class="t" style="left:1677px;top:753.21px;font-size:13.1px;color:#111;font-weight:normal;">BM-Dachfolie - VK netto 11,09 EUR - 0,00% Rabatt</div>
<div class="r" style="left:2016px;top:758px;width:12px;height:1px;background:#111;"></div>
<div class="r" style="left:2067px;top:752px;width:13px;height:13px;box-sizing:border-box;border:1px solid #111;"></div>
<svg class="r" style="left:2119px;top:751px" width="14" height="14" viewBox="0 0 14 14"><path d="M1 1 L13 13 M13 1 L1 13" stroke="#111" stroke-width="1.2"/></svg>
<div class="r" style="left:1644px;top:777px;width:508px;height:30px;background:linear-gradient(#f7f7f7,#f0f0f0);border-bottom:1px solid #e4e4e4;"></div>
<div class="t" style="left:1661.4px;top:783.51px;font-size:13.1px;color:#111;font-weight:normal;">Daten</div>
<div class="t" style="left:1718.6px;top:783.51px;font-size:13.1px;color:#111;font-weight:normal;">Drucken</div>
<div class="t" style="left:1503px;width:800px;text-align:center;top:818.59px;font-size:18.2px;color:#1a1a1a;font-weight:normal;">BM-Dachfolie - VK netto 11,09 EUR - 0,00% Rabatt</div>
<svg class="r" style="left:1700px;top:840px" width="400" height="260" viewBox="0 0 400 260"><defs><linearGradient id="sb" x1="0" x2="1" y1="0" y2="0">
<stop offset="0" stop-color="#2e4d74"/><stop offset="0.5" stop-color="#5c87b8"/><stop offset="1" stop-color="#2e4d74"/></linearGradient></defs><path d="M79.00 121.00 A117 101 0 0 0 297.32 171.50 L297.32 185.50 A117 101 0 0 1 79.00 135.00 Z" fill="url(#sb)"/><path d="M297.32 171.50 A117 101 0 0 0 313.00 121.00 L313.00 135.00 A117 101 0 0 1 297.32 185.50 Z" fill="#3f7a2c"/><ellipse cx="196" cy="121" rx="117" ry="101" fill="#5880b2"/><path d="M196 121 L87.91 82.35 A117 101 0 1 1 297.02 171.96 Z" fill="#6ac94e"/></svg>
<div class="t" style="left:1832.7px;top:909.80px;font-size:12.4px;color:#111;font-weight:normal;">5,77 EUR Rohertrag (108,50%)</div>
<div class="t" style="left:1818.8px;top:1000.10px;font-size:12.4px;color:#111;font-weight:normal;">5,32 EUR Einkauf</div>
<svg class="r" style="left:842px;top:1246px" width="16" height="14" viewBox="0 0 16 14"><path d="M8 1 L15 13 H1Z" fill="#f5b400"/><rect x="7.2" y="5" width="1.6" height="4.5" fill="#222"/><rect x="7.2" y="10.5" width="1.6" height="1.5" fill="#222"/></svg>
<div class="t" style="left:869.5px;top:1246.73px;font-size:14.5px;color:#1a1a1a;font-weight:normal;">Datenbank-Update 20.1027 erfolgreich ausgeführt.</div>
<div class="t" style="left:430px;top:1249.69px;font-size:11px;color:#777;font-weight:normal;">...</div>
<div class="t" style="left:1958.2px;top:1247.92px;font-size:13.8px;color:#1a1a1a;font-weight:normal;">Freitag, 6. November 2020,</div>
<div class="r" style="left:2128px;top:1204px;width:106px;height:74px;background:#7dad47;border-top-left-radius:20px;"></div>
<div class="r" style="left:2224px;top:1204px;width:10px;height:74px;background:#9ccc65;"></div>
<svg class="r" style="left:2128px;top:1204px" width="96" height="74" viewBox="0 0 96 74"><ellipse cx="57" cy="51.5" rx="17" ry="13.5" fill="#fff"/><path d="M60 60 L71 69 L50 63Z" fill="#fff"/><ellipse cx="43.6" cy="43" rx="23" ry="17.5" fill="#7dad47"/><ellipse cx="43.6" cy="43" rx="19.5" ry="14" fill="#fff"/><path d="M32 51 L27 61 L42 56Z" fill="#fff"/></svg></body></html>
